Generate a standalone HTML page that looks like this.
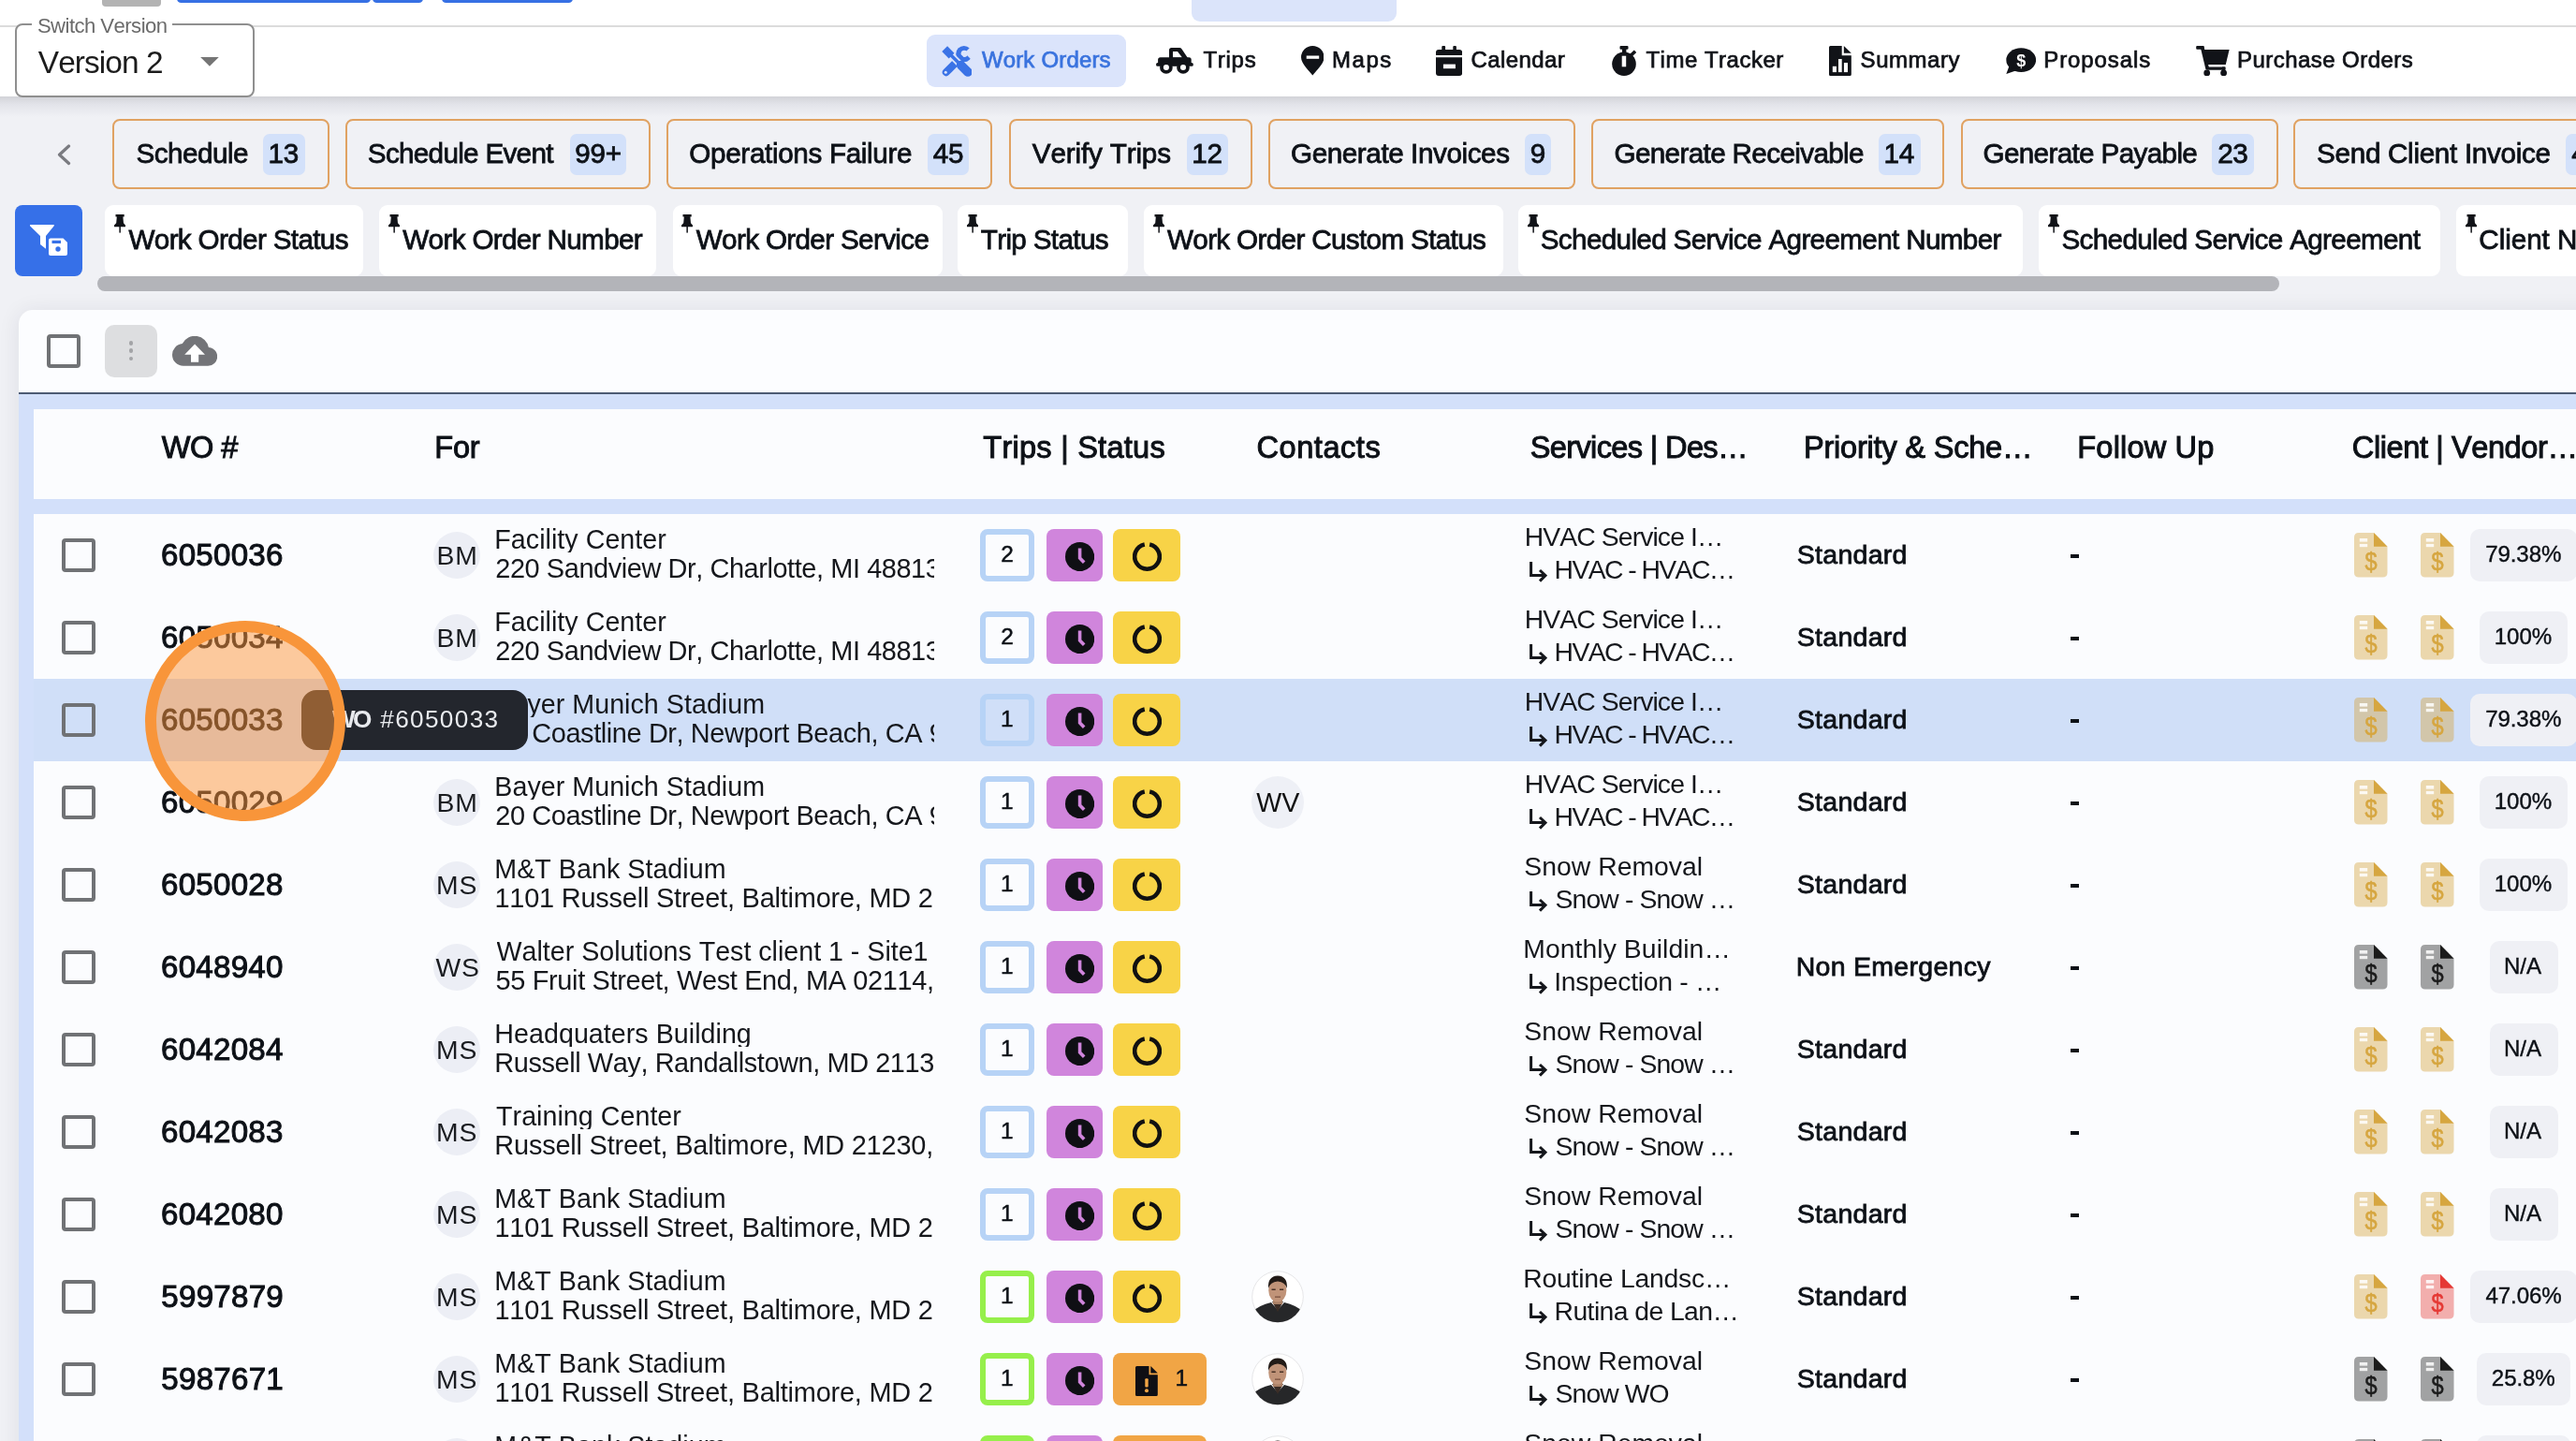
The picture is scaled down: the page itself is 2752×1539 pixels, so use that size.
<!DOCTYPE html>
<html><head><meta charset="utf-8"><title>Work Orders</title>
<style>
html,body{margin:0;padding:0;}
body{width:2752px;height:1539px;overflow:hidden;position:relative;background:#f0f1f5;font-family:"Liberation Sans",sans-serif;}
.a{position:absolute;display:block;}
.t{position:absolute;white-space:nowrap;line-height:1;font-family:"Liberation Sans",sans-serif;font-kerning:none;}
#wrap{position:absolute;left:0;top:0;width:2752px;height:1539px;overflow:hidden;will-change:transform;}
</style></head><body><div id="wrap">
<div class="a" style="left:0.00px;top:0.00px;width:2752.00px;height:103.00px;background:#ffffff;"></div>
<div class="a" style="left:0.00px;top:103.00px;width:2752.00px;height:22.00px;background:linear-gradient(#d2d3d8,#e3e4ea 40%,#f0f1f5);"></div>
<div class="a" style="left:108.50px;top:-6.00px;width:63.50px;height:12.50px;background:#b3b3b3;border-radius:4px;"></div>
<div class="a" style="left:189.30px;top:-6.00px;width:206.70px;height:8.60px;background:#3670e4;border-radius:5px;"></div>
<div class="a" style="left:398.00px;top:-6.00px;width:54.00px;height:8.60px;background:#3670e4;border-radius:5px;"></div>
<div class="a" style="left:471.50px;top:-6.00px;width:140.20px;height:8.60px;background:#3670e4;border-radius:5px;"></div>
<div class="a" style="left:1273.20px;top:-10.00px;width:218.80px;height:32.80px;background:#dbe4fa;border-radius:9px;"></div>
<div class="a" style="left:0.00px;top:26.70px;width:2752.00px;height:2.20px;background:#dcdcdc;"></div>
<div class="a" style="left:16.10px;top:25.20px;width:255.60px;height:79.10px;background:#ffffff;border-radius:8px;border:2px solid #8f8f8f;box-sizing:border-box;"></div>
<div class="a" style="left:34.00px;top:20.00px;width:150.00px;height:10.00px;background:#ffffff;"></div>
<div class="t" style="left:39.90px;top:17.39px;font-size:22.09px;letter-spacing:-0.529px;color:#6b6b6b;">Switch Version</div>
<div class="t" style="left:40.75px;top:49.79px;font-size:33.43px;letter-spacing:-0.913px;color:#1c1c1c;">Version 2</div>
<svg class="a" style="left:213.90px;top:61.00px;" width="19.90" height="9.80" viewBox="0 0 20 10"><path d="M0 0H20L10 10Z" fill="#757575"/></svg>
<div class="a" style="left:990.00px;top:37.00px;width:212.70px;height:55.70px;background:#dbe4fb;border-radius:9px;"></div>
<div class="t" style="left:1048.89px;top:52.49px;font-size:23.98px;letter-spacing:0.186px;color:#3a73de;-webkit-text-stroke:0.75px #3a73de;">Work Orders</div>
<div class="t" style="left:1285.46px;top:52.49px;font-size:23.98px;letter-spacing:0.728px;color:#111318;-webkit-text-stroke:0.75px #111318;">Trips</div>
<div class="t" style="left:1423.03px;top:52.49px;font-size:23.98px;letter-spacing:1.563px;color:#111318;-webkit-text-stroke:0.75px #111318;">Maps</div>
<div class="t" style="left:1571.38px;top:52.49px;font-size:23.98px;letter-spacing:0.442px;color:#111318;-webkit-text-stroke:0.75px #111318;">Calendar</div>
<div class="t" style="left:1758.46px;top:52.49px;font-size:23.98px;letter-spacing:0.509px;color:#111318;-webkit-text-stroke:0.75px #111318;">Time Tracker</div>
<div class="t" style="left:1987.61px;top:52.49px;font-size:23.98px;letter-spacing:0.538px;color:#111318;-webkit-text-stroke:0.75px #111318;">Summary</div>
<div class="t" style="left:2183.33px;top:52.49px;font-size:23.98px;letter-spacing:0.911px;color:#111318;-webkit-text-stroke:0.75px #111318;">Proposals</div>
<div class="t" style="left:2390.03px;top:52.49px;font-size:23.98px;letter-spacing:0.461px;color:#111318;-webkit-text-stroke:0.75px #111318;">Purchase Orders</div>
<svg class="a" style="left:1005.80px;top:49.00px;" width="32.50" height="32.50" viewBox="0 0 32.5 32.5"><defs><mask id="wm"><rect x="-5" y="-5" width="45" height="45" fill="#fff"/><path d="M24.5 7.5 L33 -1 L40 6 L31.5 14.5 Z" fill="#000"/><circle cx="24.2" cy="8.3" r="3.6" fill="#000"/></mask></defs><g mask="url(#wm)"><circle cx="23.8" cy="8.7" r="8.6" fill="#3b73e6"/></g><path d="M19.5 13.5 L4.8 28.2" stroke="#3b73e6" stroke-width="8" stroke-linecap="round"/><circle cx="4.3" cy="28.3" r="1.5" fill="#dbe4fb"/><path d="M9 9 L21 21" stroke="#dbe4fb" stroke-width="7"/><path d="M3.2 3.2 L10.6 10.6" stroke="#3b73e6" stroke-width="8.2"/><path d="M9 9 L21 21" stroke="#3b73e6" stroke-width="3.6"/><path d="M20.6 20.6 L28 28" stroke="#3b73e6" stroke-width="9.6" stroke-linecap="round"/></svg>
<svg class="a" style="left:1235.00px;top:51.00px;" width="40.00" height="28.00" viewBox="0 0 40 28"><path fill-rule="evenodd" d="M14 11 V2.5 Q14 0 16.5 0 H25 Q26.6 0 27.6 1.4 L34 11 Z M18 3.9 V10.5 H28 L23 3.9 Z" fill="#111318"/><rect x="2.1" y="10.2" width="35.6" height="9" rx="2.5" fill="#111318"/><rect x="0" y="16" width="39.9" height="3.8" rx="1.9" fill="#111318"/><circle cx="10.9" cy="21" r="6.85" fill="#111318"/><circle cx="10.9" cy="21" r="3.06" fill="#fff"/><circle cx="29" cy="21" r="6.85" fill="#111318"/><circle cx="29" cy="21" r="3.06" fill="#fff"/></svg>
<svg class="a" style="left:1389.80px;top:49.10px;" width="24.60" height="31.60" viewBox="0 0 24.6 31.6"><path d="M12.3 31.6 C10 28 0 19.5 0 12.3 A12.3 12.3 0 0 1 24.6 12.3 C24.6 19.5 14.6 28 12.3 31.6 Z" fill="#111318"/><rect x="5.7" y="10.5" width="13.5" height="3.3" fill="#fff"/></svg>
<svg class="a" style="left:1534.00px;top:49.00px;" width="28.20" height="32.00" viewBox="0 0 28.2 32"><rect x="6.3" y="0" width="3.8" height="6" rx="1" fill="#111318"/><rect x="18.3" y="0" width="3.6" height="6" rx="1" fill="#111318"/><path d="M0 7 Q0 3.9 3 3.9 H25.2 Q28.2 3.9 28.2 7 V9.9 H0 Z" fill="#111318"/><path d="M0 12.2 H28.2 V29 Q28.2 32 25.2 32 H3 Q0 32 0 29 Z" fill="#111318"/><rect x="7.9" y="19.6" width="13" height="4.6" fill="#fff"/></svg>
<svg class="a" style="left:1721.50px;top:49.00px;" width="26.50" height="32.00" viewBox="0 0 26.5 32"><rect x="8.5" y="0" width="9" height="3.7" rx="1" fill="#111318"/><rect x="11" y="3" width="4.4" height="4.5" fill="#111318"/><circle cx="13" cy="19.2" r="12.8" fill="#111318"/><path d="M20 10.5 L25 5.8" stroke="#111318" stroke-width="3.6"/><rect x="10.7" y="10.7" width="4.5" height="11.6" fill="#fff"/></svg>
<svg class="a" style="left:1954.00px;top:49.00px;" width="23.80" height="32.00" viewBox="0 0 23.8 32"><path d="M1.5 0 H13.7 V10.2 H23.8 V30.4 Q23.8 32 22.2 32 H1.5 Q0 32 0 30.4 V1.5 Q0 0 1.5 0 Z" fill="#111318"/><path d="M15.8 0 L23.8 7.7 H15.8 Z" fill="#111318"/><rect x="3.8" y="21.8" width="4.1" height="6.3" fill="#fff"/><rect x="10" y="14" width="3.7" height="14.1" fill="#fff"/><rect x="15.9" y="18" width="4.1" height="10.1" fill="#fff"/></svg>
<svg class="a" style="left:2142.70px;top:50.80px;" width="32.30" height="28.00" viewBox="0 0 32.3 28"><ellipse cx="16.2" cy="13.05" rx="15.9" ry="12.85" fill="#111318"/><path d="M3.3 20 L0.3 27.9 L10.5 24.5 Z" fill="#111318"/><text x="16.2" y="19.75" font-family="Liberation Sans" font-weight="700" font-size="18" fill="#fff" text-anchor="middle">$</text></svg>
<svg class="a" style="left:2345.80px;top:48.90px;" width="36.00" height="32.50" viewBox="0 0 36 32.5"><rect x="0.2" y="0" width="8.6" height="3.8" rx="1" fill="#111318"/><path d="M6.8 1.9 L12.4 25" stroke="#111318" stroke-width="3.8"/><path d="M6.7 4.1 H35.6 L31.8 19.9 H11 Z" fill="#111318"/><rect x="11" y="22.5" width="20.4" height="3.2" rx="1" fill="#111318"/><rect x="28" y="22.5" width="3.4" height="5" fill="#111318"/><circle cx="11.7" cy="28.9" r="3.4" fill="#111318"/><circle cx="29.6" cy="28.9" r="3.4" fill="#111318"/></svg>
<svg class="a" style="left:60.00px;top:154.30px;" width="16.00" height="22.50" viewBox="0 0 16 22.5"><path d="M13.5 2 L3.5 11.25 L13.5 20.5" fill="none" stroke="#7a7b80" stroke-width="3.2" stroke-linecap="round" stroke-linejoin="round"/></svg>
<div class="a" style="left:119.70px;top:126.80px;width:232.00px;height:75.70px;border-radius:8px;border:2px solid #e0a262;box-sizing:border-box;"></div>
<div class="t" style="left:145.55px;top:148.79px;font-size:29.65px;letter-spacing:-0.512px;color:#0d1117;-webkit-text-stroke:0.8px #0d1117;">Schedule</div>
<div class="a" style="left:281.00px;top:143.10px;width:44.60px;height:43.70px;background:#d3e1fa;border-radius:7px;"></div>
<div class="t" style="left:286.48px;top:148.79px;font-size:29.65px;letter-spacing:-0.300px;color:#0d1117;-webkit-text-stroke:0.8px #0d1117;">13</div>
<div class="a" style="left:368.60px;top:126.80px;width:326.90px;height:75.70px;border-radius:8px;border:2px solid #e0a262;box-sizing:border-box;"></div>
<div class="t" style="left:392.85px;top:148.79px;font-size:29.65px;letter-spacing:-0.696px;color:#0d1117;-webkit-text-stroke:0.8px #0d1117;">Schedule Event</div>
<div class="a" style="left:609.00px;top:143.10px;width:60.30px;height:43.70px;background:#d3e1fa;border-radius:7px;"></div>
<div class="t" style="left:614.34px;top:148.79px;font-size:29.65px;letter-spacing:-0.300px;color:#0d1117;-webkit-text-stroke:0.8px #0d1117;">99+</div>
<div class="a" style="left:712.00px;top:126.80px;width:348.40px;height:75.70px;border-radius:8px;border:2px solid #e0a262;box-sizing:border-box;"></div>
<div class="t" style="left:736.30px;top:148.79px;font-size:29.65px;letter-spacing:-0.329px;color:#0d1117;-webkit-text-stroke:0.8px #0d1117;">Operations Failure</div>
<div class="a" style="left:991.00px;top:143.10px;width:43.70px;height:43.70px;background:#d3e1fa;border-radius:7px;"></div>
<div class="t" style="left:996.79px;top:148.79px;font-size:29.65px;letter-spacing:-0.300px;color:#0d1117;-webkit-text-stroke:0.8px #0d1117;">45</div>
<div class="a" style="left:1077.50px;top:126.80px;width:260.60px;height:75.70px;border-radius:8px;border:2px solid #e0a262;box-sizing:border-box;"></div>
<div class="t" style="left:1102.87px;top:148.79px;font-size:29.65px;letter-spacing:-0.157px;color:#0d1117;-webkit-text-stroke:0.8px #0d1117;">Verify Trips</div>
<div class="a" style="left:1267.60px;top:143.10px;width:44.90px;height:43.70px;background:#d3e1fa;border-radius:7px;"></div>
<div class="t" style="left:1273.33px;top:148.79px;font-size:29.65px;letter-spacing:-0.300px;color:#0d1117;-webkit-text-stroke:0.8px #0d1117;">12</div>
<div class="a" style="left:1355.00px;top:126.80px;width:328.20px;height:75.70px;border-radius:8px;border:2px solid #e0a262;box-sizing:border-box;"></div>
<div class="t" style="left:1379.01px;top:148.79px;font-size:29.65px;letter-spacing:-0.411px;color:#0d1117;-webkit-text-stroke:0.8px #0d1117;">Generate Invoices</div>
<div class="a" style="left:1628.70px;top:143.10px;width:28.80px;height:43.70px;background:#d3e1fa;border-radius:7px;"></div>
<div class="t" style="left:1634.86px;top:148.79px;font-size:29.65px;letter-spacing:-0.300px;color:#0d1117;-webkit-text-stroke:0.8px #0d1117;">9</div>
<div class="a" style="left:1700.30px;top:126.80px;width:377.10px;height:75.70px;border-radius:8px;border:2px solid #e0a262;box-sizing:border-box;"></div>
<div class="t" style="left:1724.51px;top:148.79px;font-size:29.65px;letter-spacing:-0.636px;color:#0d1117;-webkit-text-stroke:0.8px #0d1117;">Generate Receivable</div>
<div class="a" style="left:2007.40px;top:143.10px;width:44.30px;height:43.70px;background:#d3e1fa;border-radius:7px;"></div>
<div class="t" style="left:2012.51px;top:148.79px;font-size:29.65px;letter-spacing:-0.300px;color:#0d1117;-webkit-text-stroke:0.8px #0d1117;">14</div>
<div class="a" style="left:2094.50px;top:126.80px;width:339.20px;height:75.70px;border-radius:8px;border:2px solid #e0a262;box-sizing:border-box;"></div>
<div class="t" style="left:2118.51px;top:148.79px;font-size:29.65px;letter-spacing:-0.641px;color:#0d1117;-webkit-text-stroke:0.8px #0d1117;">Generate Payable</div>
<div class="a" style="left:2363.20px;top:143.10px;width:44.80px;height:43.70px;background:#d3e1fa;border-radius:7px;"></div>
<div class="t" style="left:2369.17px;top:148.79px;font-size:29.65px;letter-spacing:-0.300px;color:#0d1117;-webkit-text-stroke:0.8px #0d1117;">23</div>
<div class="a" style="left:2449.70px;top:126.80px;width:350.30px;height:75.70px;border-radius:8px;border:2px solid #e0a262;box-sizing:border-box;"></div>
<div class="t" style="left:2475.05px;top:148.79px;font-size:29.65px;letter-spacing:-0.301px;color:#0d1117;-webkit-text-stroke:0.8px #0d1117;">Send Client Invoice</div>
<div class="a" style="left:2740.80px;top:143.10px;width:49.20px;height:43.70px;background:#d3e1fa;border-radius:7px;"></div>
<div class="t" style="left:2747.32px;top:148.79px;font-size:29.65px;letter-spacing:-0.300px;color:#0d1117;-webkit-text-stroke:0.8px #0d1117;">45</div>
<div class="a" style="left:16.00px;top:219.10px;width:72.00px;height:75.70px;background:#3670e8;border-radius:8px;"></div>
<svg class="a" style="left:32.00px;top:240.30px;" width="40.00" height="33.00" viewBox="0 0 40 33"><path d="M0.5 0 H25.2 Q26.5 0 25.7 1.2 L17 12 V25.7 L11 21 V12 L0 1.2 Q-0.5 0 0.5 0 Z" fill="#fff"/><path d="M17 12 L18.5 13 V25.7 H17 Z" fill="#3670e8"/><rect x="18.5" y="12.7" width="22" height="21" fill="#3670e8"/><path d="M22 14.4 H35.5 L40 18.9 V31 Q40 33 38 33 H22 Q20 33 20 31 V16.4 Q20 14.4 22 14.4 Z" fill="#fff"/><rect x="23.5" y="16.8" width="9.5" height="3.2" fill="#3670e8"/><circle cx="30" cy="26" r="2.7" fill="#3670e8"/></svg>
<div class="a" style="left:112.20px;top:219.10px;width:276.30px;height:75.70px;background:#ffffff;border-radius:9px;"></div>
<div class="t" style="left:137.47px;top:240.89px;font-size:29.65px;letter-spacing:-0.650px;color:#0d1117;-webkit-text-stroke:0.8px #0d1117;">Work Order Status</div>
<svg class="a" style="left:122.00px;top:229.00px;" width="12.20" height="19.60" viewBox="0 0 12.2 19.6"><path d="M1.5 0 H10.7 V2.6 H9.4 L10 9.3 L12.2 11.6 V13.3 H0 V11.6 L2.2 9.3 L2.8 2.6 H1.5 Z" fill="#111318"/><rect x="5.4" y="13" width="1.5" height="6.6" fill="#111318"/></svg>
<div class="a" style="left:405.00px;top:219.10px;width:296.40px;height:75.70px;background:#ffffff;border-radius:9px;"></div>
<div class="t" style="left:430.27px;top:240.89px;font-size:29.65px;letter-spacing:-0.650px;color:#0d1117;-webkit-text-stroke:0.8px #0d1117;">Work Order Number</div>
<svg class="a" style="left:414.80px;top:229.00px;" width="12.20" height="19.60" viewBox="0 0 12.2 19.6"><path d="M1.5 0 H10.7 V2.6 H9.4 L10 9.3 L12.2 11.6 V13.3 H0 V11.6 L2.2 9.3 L2.8 2.6 H1.5 Z" fill="#111318"/><rect x="5.4" y="13" width="1.5" height="6.6" fill="#111318"/></svg>
<div class="a" style="left:718.50px;top:219.10px;width:288.50px;height:75.70px;background:#ffffff;border-radius:9px;"></div>
<div class="t" style="left:743.77px;top:240.89px;font-size:29.65px;letter-spacing:-0.650px;color:#0d1117;-webkit-text-stroke:0.8px #0d1117;">Work Order Service</div>
<svg class="a" style="left:728.30px;top:229.00px;" width="12.20" height="19.60" viewBox="0 0 12.2 19.6"><path d="M1.5 0 H10.7 V2.6 H9.4 L10 9.3 L12.2 11.6 V13.3 H0 V11.6 L2.2 9.3 L2.8 2.6 H1.5 Z" fill="#111318"/><rect x="5.4" y="13" width="1.5" height="6.6" fill="#111318"/></svg>
<div class="a" style="left:1023.00px;top:219.10px;width:181.60px;height:75.70px;background:#ffffff;border-radius:9px;"></div>
<div class="t" style="left:1047.73px;top:240.89px;font-size:29.65px;letter-spacing:-0.650px;color:#0d1117;-webkit-text-stroke:0.8px #0d1117;">Trip Status</div>
<svg class="a" style="left:1032.80px;top:229.00px;" width="12.20" height="19.60" viewBox="0 0 12.2 19.6"><path d="M1.5 0 H10.7 V2.6 H9.4 L10 9.3 L12.2 11.6 V13.3 H0 V11.6 L2.2 9.3 L2.8 2.6 H1.5 Z" fill="#111318"/><rect x="5.4" y="13" width="1.5" height="6.6" fill="#111318"/></svg>
<div class="a" style="left:1221.70px;top:219.10px;width:384.00px;height:75.70px;background:#ffffff;border-radius:9px;"></div>
<div class="t" style="left:1246.97px;top:240.89px;font-size:29.65px;letter-spacing:-0.650px;color:#0d1117;-webkit-text-stroke:0.8px #0d1117;">Work Order Custom Status</div>
<svg class="a" style="left:1231.50px;top:229.00px;" width="12.20" height="19.60" viewBox="0 0 12.2 19.6"><path d="M1.5 0 H10.7 V2.6 H9.4 L10 9.3 L12.2 11.6 V13.3 H0 V11.6 L2.2 9.3 L2.8 2.6 H1.5 Z" fill="#111318"/><rect x="5.4" y="13" width="1.5" height="6.6" fill="#111318"/></svg>
<div class="a" style="left:1621.70px;top:219.10px;width:539.60px;height:75.70px;background:#ffffff;border-radius:9px;"></div>
<div class="t" style="left:1645.75px;top:240.89px;font-size:29.65px;letter-spacing:-0.650px;color:#0d1117;-webkit-text-stroke:0.8px #0d1117;">Scheduled Service Agreement Number</div>
<svg class="a" style="left:1631.50px;top:229.00px;" width="12.20" height="19.60" viewBox="0 0 12.2 19.6"><path d="M1.5 0 H10.7 V2.6 H9.4 L10 9.3 L12.2 11.6 V13.3 H0 V11.6 L2.2 9.3 L2.8 2.6 H1.5 Z" fill="#111318"/><rect x="5.4" y="13" width="1.5" height="6.6" fill="#111318"/></svg>
<div class="a" style="left:2178.40px;top:219.10px;width:428.90px;height:75.70px;background:#ffffff;border-radius:9px;"></div>
<div class="t" style="left:2202.45px;top:240.89px;font-size:29.65px;letter-spacing:-0.650px;color:#0d1117;-webkit-text-stroke:0.8px #0d1117;">Scheduled Service Agreement</div>
<svg class="a" style="left:2188.20px;top:229.00px;" width="12.20" height="19.60" viewBox="0 0 12.2 19.6"><path d="M1.5 0 H10.7 V2.6 H9.4 L10 9.3 L12.2 11.6 V13.3 H0 V11.6 L2.2 9.3 L2.8 2.6 H1.5 Z" fill="#111318"/><rect x="5.4" y="13" width="1.5" height="6.6" fill="#111318"/></svg>
<div class="a" style="left:2624.40px;top:219.10px;width:375.60px;height:75.70px;background:#ffffff;border-radius:9px;"></div>
<div class="t" style="left:2648.29px;top:240.89px;font-size:29.65px;letter-spacing:-0.048px;color:#0d1117;-webkit-text-stroke:0.8px #0d1117;">Client Name</div>
<svg class="a" style="left:2634.20px;top:229.00px;" width="12.20" height="19.60" viewBox="0 0 12.2 19.6"><path d="M1.5 0 H10.7 V2.6 H9.4 L10 9.3 L12.2 11.6 V13.3 H0 V11.6 L2.2 9.3 L2.8 2.6 H1.5 Z" fill="#111318"/><rect x="5.4" y="13" width="1.5" height="6.6" fill="#111318"/></svg>
<div class="a" style="left:103.90px;top:295.10px;width:2330.80px;height:15.80px;background:#b3b4b9;border-radius:8px;"></div>
<div class="a" style="left:19.80px;top:331.00px;width:2800.00px;height:1300.00px;background:#fcfdff;border-radius:15px;box-shadow:0 2px 22px 2px rgba(20,30,60,0.07);"></div>
<div class="a" style="left:50.00px;top:357.00px;width:35.90px;height:35.90px;border-radius:4px;border:4px solid #707275;box-sizing:border-box;"></div>
<div class="a" style="left:112.00px;top:347.00px;width:55.90px;height:55.70px;background:#dddee0;border-radius:10px;"></div>
<div class="a" style="left:137.60px;top:364.20px;width:4.80px;height:4.80px;background:#a3a4a7;border-radius:3px;"></div>
<div class="a" style="left:137.60px;top:372.40px;width:4.80px;height:4.80px;background:#a3a4a7;border-radius:3px;"></div>
<div class="a" style="left:137.60px;top:380.50px;width:4.80px;height:4.80px;background:#a3a4a7;border-radius:3px;"></div>
<svg class="a" style="left:183.80px;top:359.00px;" width="48.20" height="31.80" viewBox="0 0 48.2 31.8"><path d="M38.9 12 A15 15 0 0 0 10.8 8 A12 12 0 0 0 0 20 A11.8 11.8 0 0 0 11.8 31.8 H37.8 A10 10 0 0 0 48.2 21.8 C48.2 16.5 44 12.3 38.9 12 Z" fill="#737478"/><path d="M24.1 8.5 L35 19.8 H28.2 V27.8 H20 V19.8 H13.2 Z" fill="#fff"/></svg>
<div class="a" style="left:19.80px;top:419.00px;width:2800.00px;height:2.00px;background:#4d5b73;"></div>
<div class="a" style="left:19.80px;top:421.00px;width:2800.00px;height:1200.00px;background:#d3e0fa;"></div>
<div class="a" style="left:35.70px;top:436.50px;width:2800.00px;height:96.10px;background:#fbfcfe;"></div>
<div class="t" style="left:172.86px;top:462.23px;font-size:32.56px;letter-spacing:-0.600px;color:#0d1117;-webkit-text-stroke:1.0px #0d1117;">WO #</div>
<div class="t" style="left:464.33px;top:462.23px;font-size:32.56px;letter-spacing:-0.313px;color:#0d1117;-webkit-text-stroke:1.0px #0d1117;">For</div>
<div class="t" style="left:1050.27px;top:462.23px;font-size:32.56px;letter-spacing:0.254px;color:#0d1117;-webkit-text-stroke:1.0px #0d1117;">Trips | Status</div>
<div class="t" style="left:1342.45px;top:462.23px;font-size:32.56px;letter-spacing:0.549px;color:#0d1117;-webkit-text-stroke:1.0px #0d1117;">Contacts</div>
<div class="t" style="left:1634.72px;top:462.23px;font-size:32.56px;letter-spacing:-0.640px;color:#0d1117;-webkit-text-stroke:1.0px #0d1117;">Services | Des…</div>
<div class="t" style="left:1926.93px;top:462.23px;font-size:32.56px;letter-spacing:-0.213px;color:#0d1117;-webkit-text-stroke:1.0px #0d1117;">Priority &amp; Sche…</div>
<div class="t" style="left:2219.33px;top:462.23px;font-size:32.56px;letter-spacing:0.161px;color:#0d1117;-webkit-text-stroke:1.0px #0d1117;">Follow Up</div>
<div class="t" style="left:2512.85px;top:462.23px;font-size:32.56px;letter-spacing:-0.411px;color:#0d1117;-webkit-text-stroke:1.0px #0d1117;">Client | Vendor…</div>
<div class="a" style="left:35.70px;top:548.50px;width:2800.00px;height:88.00px;background:#fbfcfe;"></div>
<div class="a" style="left:66.00px;top:574.90px;width:36.10px;height:36.10px;border-radius:4px;border:4px solid #707275;box-sizing:border-box;"></div>
<div class="t" style="left:172.02px;top:575.84px;font-size:33.14px;letter-spacing:0.237px;color:#0d1117;-webkit-text-stroke:1.0px #0d1117;">6050036</div>
<div class="a" style="left:462.75px;top:567.75px;width:50.50px;height:50.50px;background:#eceef5;border-radius:26px;"></div>
<div class="t" style="left:466.54px;top:578.80px;font-size:28.34px;letter-spacing:0.800px;color:#1a1c20;">BM</div>
<div class="t" style="left:528.35px;top:561.56px;font-size:28.63px;letter-spacing:0.038px;color:#15171c;width:469.85px;overflow:hidden;">Facility Center</div>
<div class="t" style="left:529.25px;top:593.21px;font-size:28.92px;letter-spacing:-0.413px;color:#15171c;width:468.95px;overflow:hidden;">220 Sandview Dr, Charlotte, MI 48813, USA</div>
<div class="a" style="left:1047.00px;top:564.80px;width:58.00px;height:55.90px;border-radius:8px;border:6px solid #b7d3f6;box-sizing:border-box;"></div>
<div class="t" style="left:1069.21px;top:580.12px;font-size:24.42px;letter-spacing:0.000px;color:#0d1117;-webkit-text-stroke:0.5px #0d1117;">2</div>
<div class="a" style="left:1118.00px;top:564.80px;width:60.00px;height:55.90px;background:#d085dc;border-radius:8px;"></div>
<svg class="a" style="left:1138.00px;top:579.20px;" width="31.20" height="31.20" viewBox="0 0 31.2 31.2"><circle cx="15.6" cy="15.6" r="15.6" fill="#0f0f14"/><path d="M15.6 6.5 V17 L20.2 21.8" fill="none" stroke="#d085dc" stroke-width="3.6" stroke-linecap="butt" stroke-linejoin="miter"/></svg>
<div class="a" style="left:1189.00px;top:564.80px;width:71.80px;height:55.90px;background:#f8d347;border-radius:8px;"></div>
<svg class="a" style="left:1209.70px;top:579.40px;" width="31.20" height="31.20" viewBox="0 0 31.2 31.2"><path d="M12.8 2.4 A13.3 13.3 0 1 0 18.2 2.4" fill="none" stroke="#111" stroke-width="4.6" stroke-linecap="butt"/></svg>
<div class="t" style="left:1628.67px;top:558.90px;font-size:28.34px;letter-spacing:-0.890px;color:#15171c;">HVAC Service I…</div>
<svg class="a" style="left:1633.70px;top:600.30px;" width="19.80" height="22.40" viewBox="0 0 19.8 22.4"><path d="M1.6 0 V14.6 H16" fill="none" stroke="#15171c" stroke-width="3"/><path d="M11 9 L17 14.6 L11 20.6" fill="none" stroke="#15171c" stroke-width="3"/></svg>
<div class="t" style="left:1660.57px;top:594.00px;font-size:28.34px;letter-spacing:-1.578px;color:#15171c;">HVAC - HVAC…</div>
<div class="t" style="left:1919.81px;top:577.88px;font-size:28.49px;letter-spacing:0.286px;color:#0d1117;-webkit-text-stroke:0.8px #0d1117;">Standard</div>
<div class="a" style="left:2212.20px;top:591.70px;width:8.50px;height:4.60px;background:#0d1117;"></div>
<svg class="a" style="left:2515.20px;top:569.20px;" width="35.50" height="47.60" viewBox="0 0 35.5 47.6"><path d="M0 5 Q0 0 5 0 H21 L35.5 14.7 V42.6 Q35.5 47.6 30.5 47.6 H5 Q0 47.6 0 42.6 Z" fill="rgba(212,164,62,0.42)"/><path d="M21 0 L35.5 14.7 H21 Z" fill="#d6a640"/><rect x="5.8" y="6" width="8.4" height="3.6" fill="#fff" fill-opacity="0.85"/><rect x="5.8" y="11.9" width="8.4" height="3.3" fill="#fff" fill-opacity="0.85"/><text transform="translate(18.1,0) scale(0.86,1)" x="0" y="40.4" font-family="Liberation Sans" font-weight="400" stroke="#d6a640" stroke-width="0.6" font-size="27.4" fill="#d6a640" text-anchor="middle">$</text></svg>
<svg class="a" style="left:2586.10px;top:569.20px;" width="35.50" height="47.60" viewBox="0 0 35.5 47.6"><path d="M0 5 Q0 0 5 0 H21 L35.5 14.7 V42.6 Q35.5 47.6 30.5 47.6 H5 Q0 47.6 0 42.6 Z" fill="rgba(212,164,62,0.42)"/><path d="M21 0 L35.5 14.7 H21 Z" fill="#d6a640"/><rect x="5.8" y="6" width="8.4" height="3.6" fill="#fff" fill-opacity="0.85"/><rect x="5.8" y="11.9" width="8.4" height="3.3" fill="#fff" fill-opacity="0.85"/><text transform="translate(18.1,0) scale(0.86,1)" x="0" y="40.4" font-family="Liberation Sans" font-weight="400" stroke="#d6a640" stroke-width="0.6" font-size="27.4" fill="#d6a640" text-anchor="middle">$</text></svg>
<div class="a" style="left:2638.88px;top:564.80px;width:114.24px;height:55.80px;background:#eff0f5;border-radius:10px;"></div>
<div class="t" style="left:2655.14px;top:580.37px;font-size:24.13px;letter-spacing:-0.100px;color:#0d1117;-webkit-text-stroke:0.4px #0d1117;">79.38%</div>
<div class="a" style="left:35.70px;top:636.50px;width:2800.00px;height:88.00px;background:#fbfcfe;"></div>
<div class="a" style="left:66.00px;top:662.90px;width:36.10px;height:36.10px;border-radius:4px;border:4px solid #707275;box-sizing:border-box;"></div>
<div class="t" style="left:172.02px;top:663.84px;font-size:33.14px;letter-spacing:0.237px;color:#0d1117;-webkit-text-stroke:1.0px #0d1117;">6050034</div>
<div class="a" style="left:462.75px;top:655.75px;width:50.50px;height:50.50px;background:#eceef5;border-radius:26px;"></div>
<div class="t" style="left:466.54px;top:666.80px;font-size:28.34px;letter-spacing:0.800px;color:#1a1c20;">BM</div>
<div class="t" style="left:528.35px;top:649.56px;font-size:28.63px;letter-spacing:0.038px;color:#15171c;width:469.85px;overflow:hidden;">Facility Center</div>
<div class="t" style="left:529.25px;top:681.21px;font-size:28.92px;letter-spacing:-0.413px;color:#15171c;width:468.95px;overflow:hidden;">220 Sandview Dr, Charlotte, MI 48813, USA</div>
<div class="a" style="left:1047.00px;top:652.80px;width:58.00px;height:55.90px;border-radius:8px;border:6px solid #b7d3f6;box-sizing:border-box;"></div>
<div class="t" style="left:1069.21px;top:668.12px;font-size:24.42px;letter-spacing:0.000px;color:#0d1117;-webkit-text-stroke:0.5px #0d1117;">2</div>
<div class="a" style="left:1118.00px;top:652.80px;width:60.00px;height:55.90px;background:#d085dc;border-radius:8px;"></div>
<svg class="a" style="left:1138.00px;top:667.20px;" width="31.20" height="31.20" viewBox="0 0 31.2 31.2"><circle cx="15.6" cy="15.6" r="15.6" fill="#0f0f14"/><path d="M15.6 6.5 V17 L20.2 21.8" fill="none" stroke="#d085dc" stroke-width="3.6" stroke-linecap="butt" stroke-linejoin="miter"/></svg>
<div class="a" style="left:1189.00px;top:652.80px;width:71.80px;height:55.90px;background:#f8d347;border-radius:8px;"></div>
<svg class="a" style="left:1209.70px;top:667.40px;" width="31.20" height="31.20" viewBox="0 0 31.2 31.2"><path d="M12.8 2.4 A13.3 13.3 0 1 0 18.2 2.4" fill="none" stroke="#111" stroke-width="4.6" stroke-linecap="butt"/></svg>
<div class="t" style="left:1628.67px;top:646.90px;font-size:28.34px;letter-spacing:-0.890px;color:#15171c;">HVAC Service I…</div>
<svg class="a" style="left:1633.70px;top:688.30px;" width="19.80" height="22.40" viewBox="0 0 19.8 22.4"><path d="M1.6 0 V14.6 H16" fill="none" stroke="#15171c" stroke-width="3"/><path d="M11 9 L17 14.6 L11 20.6" fill="none" stroke="#15171c" stroke-width="3"/></svg>
<div class="t" style="left:1660.57px;top:682.00px;font-size:28.34px;letter-spacing:-1.578px;color:#15171c;">HVAC - HVAC…</div>
<div class="t" style="left:1919.81px;top:665.88px;font-size:28.49px;letter-spacing:0.286px;color:#0d1117;-webkit-text-stroke:0.8px #0d1117;">Standard</div>
<div class="a" style="left:2212.20px;top:679.70px;width:8.50px;height:4.60px;background:#0d1117;"></div>
<svg class="a" style="left:2515.20px;top:657.20px;" width="35.50" height="47.60" viewBox="0 0 35.5 47.6"><path d="M0 5 Q0 0 5 0 H21 L35.5 14.7 V42.6 Q35.5 47.6 30.5 47.6 H5 Q0 47.6 0 42.6 Z" fill="rgba(212,164,62,0.42)"/><path d="M21 0 L35.5 14.7 H21 Z" fill="#d6a640"/><rect x="5.8" y="6" width="8.4" height="3.6" fill="#fff" fill-opacity="0.85"/><rect x="5.8" y="11.9" width="8.4" height="3.3" fill="#fff" fill-opacity="0.85"/><text transform="translate(18.1,0) scale(0.86,1)" x="0" y="40.4" font-family="Liberation Sans" font-weight="400" stroke="#d6a640" stroke-width="0.6" font-size="27.4" fill="#d6a640" text-anchor="middle">$</text></svg>
<svg class="a" style="left:2586.10px;top:657.20px;" width="35.50" height="47.60" viewBox="0 0 35.5 47.6"><path d="M0 5 Q0 0 5 0 H21 L35.5 14.7 V42.6 Q35.5 47.6 30.5 47.6 H5 Q0 47.6 0 42.6 Z" fill="rgba(212,164,62,0.42)"/><path d="M21 0 L35.5 14.7 H21 Z" fill="#d6a640"/><rect x="5.8" y="6" width="8.4" height="3.6" fill="#fff" fill-opacity="0.85"/><rect x="5.8" y="11.9" width="8.4" height="3.3" fill="#fff" fill-opacity="0.85"/><text transform="translate(18.1,0) scale(0.86,1)" x="0" y="40.4" font-family="Liberation Sans" font-weight="400" stroke="#d6a640" stroke-width="0.6" font-size="27.4" fill="#d6a640" text-anchor="middle">$</text></svg>
<div class="a" style="left:2649.14px;top:652.80px;width:93.71px;height:55.80px;background:#eff0f5;border-radius:10px;"></div>
<div class="t" style="left:2664.81px;top:668.37px;font-size:24.13px;letter-spacing:-0.100px;color:#0d1117;-webkit-text-stroke:0.4px #0d1117;">100%</div>
<div class="a" style="left:35.70px;top:724.50px;width:2800.00px;height:88.00px;background:#d0dff8;"></div>
<div class="a" style="left:66.00px;top:750.90px;width:36.10px;height:36.10px;border-radius:4px;border:4px solid #707275;box-sizing:border-box;"></div>
<div class="t" style="left:172.02px;top:751.84px;font-size:33.14px;letter-spacing:0.237px;color:#0d1117;-webkit-text-stroke:1.0px #0d1117;">6050033</div>
<div class="a" style="left:462.75px;top:743.75px;width:50.50px;height:50.50px;background:#eceef5;border-radius:26px;"></div>
<div class="t" style="left:466.54px;top:754.80px;font-size:28.34px;letter-spacing:0.800px;color:#1a1c20;">BM</div>
<div class="t" style="left:528.35px;top:737.56px;font-size:28.63px;letter-spacing:0.038px;color:#15171c;width:469.85px;overflow:hidden;">Bayer Munich Stadium</div>
<div class="t" style="left:529.25px;top:769.21px;font-size:28.92px;letter-spacing:-0.392px;color:#15171c;width:468.95px;overflow:hidden;">20 Coastline Dr, Newport Beach, CA 92660, USA</div>
<div class="a" style="left:1047.00px;top:740.80px;width:58.00px;height:55.90px;border-radius:8px;border:6px solid #b7d3f6;box-sizing:border-box;"></div>
<div class="t" style="left:1068.88px;top:756.12px;font-size:24.42px;letter-spacing:0.000px;color:#0d1117;-webkit-text-stroke:0.5px #0d1117;">1</div>
<div class="a" style="left:1118.00px;top:740.80px;width:60.00px;height:55.90px;background:#d085dc;border-radius:8px;"></div>
<svg class="a" style="left:1138.00px;top:755.20px;" width="31.20" height="31.20" viewBox="0 0 31.2 31.2"><circle cx="15.6" cy="15.6" r="15.6" fill="#0f0f14"/><path d="M15.6 6.5 V17 L20.2 21.8" fill="none" stroke="#d085dc" stroke-width="3.6" stroke-linecap="butt" stroke-linejoin="miter"/></svg>
<div class="a" style="left:1189.00px;top:740.80px;width:71.80px;height:55.90px;background:#f8d347;border-radius:8px;"></div>
<svg class="a" style="left:1209.70px;top:755.40px;" width="31.20" height="31.20" viewBox="0 0 31.2 31.2"><path d="M12.8 2.4 A13.3 13.3 0 1 0 18.2 2.4" fill="none" stroke="#111" stroke-width="4.6" stroke-linecap="butt"/></svg>
<div class="t" style="left:1628.67px;top:734.90px;font-size:28.34px;letter-spacing:-0.890px;color:#15171c;">HVAC Service I…</div>
<svg class="a" style="left:1633.70px;top:776.30px;" width="19.80" height="22.40" viewBox="0 0 19.8 22.4"><path d="M1.6 0 V14.6 H16" fill="none" stroke="#15171c" stroke-width="3"/><path d="M11 9 L17 14.6 L11 20.6" fill="none" stroke="#15171c" stroke-width="3"/></svg>
<div class="t" style="left:1660.57px;top:770.00px;font-size:28.34px;letter-spacing:-1.578px;color:#15171c;">HVAC - HVAC…</div>
<div class="t" style="left:1919.81px;top:753.88px;font-size:28.49px;letter-spacing:0.286px;color:#0d1117;-webkit-text-stroke:0.8px #0d1117;">Standard</div>
<div class="a" style="left:2212.20px;top:767.70px;width:8.50px;height:4.60px;background:#0d1117;"></div>
<svg class="a" style="left:2515.20px;top:745.20px;" width="35.50" height="47.60" viewBox="0 0 35.5 47.6"><path d="M0 5 Q0 0 5 0 H21 L35.5 14.7 V42.6 Q35.5 47.6 30.5 47.6 H5 Q0 47.6 0 42.6 Z" fill="rgba(212,164,62,0.42)"/><path d="M21 0 L35.5 14.7 H21 Z" fill="#d6a640"/><rect x="5.8" y="6" width="8.4" height="3.6" fill="#fff" fill-opacity="0.85"/><rect x="5.8" y="11.9" width="8.4" height="3.3" fill="#fff" fill-opacity="0.85"/><text transform="translate(18.1,0) scale(0.86,1)" x="0" y="40.4" font-family="Liberation Sans" font-weight="400" stroke="#d6a640" stroke-width="0.6" font-size="27.4" fill="#d6a640" text-anchor="middle">$</text></svg>
<svg class="a" style="left:2586.10px;top:745.20px;" width="35.50" height="47.60" viewBox="0 0 35.5 47.6"><path d="M0 5 Q0 0 5 0 H21 L35.5 14.7 V42.6 Q35.5 47.6 30.5 47.6 H5 Q0 47.6 0 42.6 Z" fill="rgba(212,164,62,0.42)"/><path d="M21 0 L35.5 14.7 H21 Z" fill="#d6a640"/><rect x="5.8" y="6" width="8.4" height="3.6" fill="#fff" fill-opacity="0.85"/><rect x="5.8" y="11.9" width="8.4" height="3.3" fill="#fff" fill-opacity="0.85"/><text transform="translate(18.1,0) scale(0.86,1)" x="0" y="40.4" font-family="Liberation Sans" font-weight="400" stroke="#d6a640" stroke-width="0.6" font-size="27.4" fill="#d6a640" text-anchor="middle">$</text></svg>
<div class="a" style="left:2638.88px;top:740.80px;width:114.24px;height:55.80px;background:#eff0f5;border-radius:10px;"></div>
<div class="t" style="left:2655.14px;top:756.37px;font-size:24.13px;letter-spacing:-0.100px;color:#0d1117;-webkit-text-stroke:0.4px #0d1117;">79.38%</div>
<div class="a" style="left:35.70px;top:812.50px;width:2800.00px;height:88.00px;background:#fbfcfe;"></div>
<div class="a" style="left:66.00px;top:838.90px;width:36.10px;height:36.10px;border-radius:4px;border:4px solid #707275;box-sizing:border-box;"></div>
<div class="t" style="left:172.02px;top:839.84px;font-size:33.14px;letter-spacing:0.237px;color:#0d1117;-webkit-text-stroke:1.0px #0d1117;">6050029</div>
<div class="a" style="left:462.75px;top:831.75px;width:50.50px;height:50.50px;background:#eceef5;border-radius:26px;"></div>
<div class="t" style="left:466.54px;top:842.80px;font-size:28.34px;letter-spacing:0.800px;color:#1a1c20;">BM</div>
<div class="t" style="left:528.35px;top:825.56px;font-size:28.63px;letter-spacing:0.038px;color:#15171c;width:469.85px;overflow:hidden;">Bayer Munich Stadium</div>
<div class="t" style="left:529.25px;top:857.21px;font-size:28.92px;letter-spacing:-0.392px;color:#15171c;width:468.95px;overflow:hidden;">20 Coastline Dr, Newport Beach, CA 92660, USA</div>
<div class="a" style="left:1047.00px;top:828.80px;width:58.00px;height:55.90px;border-radius:8px;border:6px solid #b7d3f6;box-sizing:border-box;"></div>
<div class="t" style="left:1068.88px;top:844.12px;font-size:24.42px;letter-spacing:0.000px;color:#0d1117;-webkit-text-stroke:0.5px #0d1117;">1</div>
<div class="a" style="left:1118.00px;top:828.80px;width:60.00px;height:55.90px;background:#d085dc;border-radius:8px;"></div>
<svg class="a" style="left:1138.00px;top:843.20px;" width="31.20" height="31.20" viewBox="0 0 31.2 31.2"><circle cx="15.6" cy="15.6" r="15.6" fill="#0f0f14"/><path d="M15.6 6.5 V17 L20.2 21.8" fill="none" stroke="#d085dc" stroke-width="3.6" stroke-linecap="butt" stroke-linejoin="miter"/></svg>
<div class="a" style="left:1189.00px;top:828.80px;width:71.80px;height:55.90px;background:#f8d347;border-radius:8px;"></div>
<svg class="a" style="left:1209.70px;top:843.40px;" width="31.20" height="31.20" viewBox="0 0 31.2 31.2"><path d="M12.8 2.4 A13.3 13.3 0 1 0 18.2 2.4" fill="none" stroke="#111" stroke-width="4.6" stroke-linecap="butt"/></svg>
<div class="a" style="left:1336.80px;top:829.20px;width:56.00px;height:56.00px;background:#eef0f6;border-radius:28px;"></div>
<div class="t" style="left:1342.14px;top:842.66px;font-size:28.63px;letter-spacing:0.000px;color:#111;">WV</div>
<div class="t" style="left:1628.67px;top:822.90px;font-size:28.34px;letter-spacing:-0.890px;color:#15171c;">HVAC Service I…</div>
<svg class="a" style="left:1633.70px;top:864.30px;" width="19.80" height="22.40" viewBox="0 0 19.8 22.4"><path d="M1.6 0 V14.6 H16" fill="none" stroke="#15171c" stroke-width="3"/><path d="M11 9 L17 14.6 L11 20.6" fill="none" stroke="#15171c" stroke-width="3"/></svg>
<div class="t" style="left:1660.57px;top:858.00px;font-size:28.34px;letter-spacing:-1.578px;color:#15171c;">HVAC - HVAC…</div>
<div class="t" style="left:1919.81px;top:841.88px;font-size:28.49px;letter-spacing:0.286px;color:#0d1117;-webkit-text-stroke:0.8px #0d1117;">Standard</div>
<div class="a" style="left:2212.20px;top:855.70px;width:8.50px;height:4.60px;background:#0d1117;"></div>
<svg class="a" style="left:2515.20px;top:833.20px;" width="35.50" height="47.60" viewBox="0 0 35.5 47.6"><path d="M0 5 Q0 0 5 0 H21 L35.5 14.7 V42.6 Q35.5 47.6 30.5 47.6 H5 Q0 47.6 0 42.6 Z" fill="rgba(212,164,62,0.42)"/><path d="M21 0 L35.5 14.7 H21 Z" fill="#d6a640"/><rect x="5.8" y="6" width="8.4" height="3.6" fill="#fff" fill-opacity="0.85"/><rect x="5.8" y="11.9" width="8.4" height="3.3" fill="#fff" fill-opacity="0.85"/><text transform="translate(18.1,0) scale(0.86,1)" x="0" y="40.4" font-family="Liberation Sans" font-weight="400" stroke="#d6a640" stroke-width="0.6" font-size="27.4" fill="#d6a640" text-anchor="middle">$</text></svg>
<svg class="a" style="left:2586.10px;top:833.20px;" width="35.50" height="47.60" viewBox="0 0 35.5 47.6"><path d="M0 5 Q0 0 5 0 H21 L35.5 14.7 V42.6 Q35.5 47.6 30.5 47.6 H5 Q0 47.6 0 42.6 Z" fill="rgba(212,164,62,0.42)"/><path d="M21 0 L35.5 14.7 H21 Z" fill="#d6a640"/><rect x="5.8" y="6" width="8.4" height="3.6" fill="#fff" fill-opacity="0.85"/><rect x="5.8" y="11.9" width="8.4" height="3.3" fill="#fff" fill-opacity="0.85"/><text transform="translate(18.1,0) scale(0.86,1)" x="0" y="40.4" font-family="Liberation Sans" font-weight="400" stroke="#d6a640" stroke-width="0.6" font-size="27.4" fill="#d6a640" text-anchor="middle">$</text></svg>
<div class="a" style="left:2649.14px;top:828.80px;width:93.71px;height:55.80px;background:#eff0f5;border-radius:10px;"></div>
<div class="t" style="left:2664.81px;top:844.37px;font-size:24.13px;letter-spacing:-0.100px;color:#0d1117;-webkit-text-stroke:0.4px #0d1117;">100%</div>
<div class="a" style="left:35.70px;top:900.50px;width:2800.00px;height:88.00px;background:#fbfcfe;"></div>
<div class="a" style="left:66.00px;top:926.90px;width:36.10px;height:36.10px;border-radius:4px;border:4px solid #707275;box-sizing:border-box;"></div>
<div class="t" style="left:172.02px;top:927.84px;font-size:33.14px;letter-spacing:0.237px;color:#0d1117;-webkit-text-stroke:1.0px #0d1117;">6050028</div>
<div class="a" style="left:462.75px;top:919.75px;width:50.50px;height:50.50px;background:#eceef5;border-radius:26px;"></div>
<div class="t" style="left:466.03px;top:930.80px;font-size:28.34px;letter-spacing:0.800px;color:#1a1c20;">MS</div>
<div class="t" style="left:528.35px;top:913.56px;font-size:28.63px;letter-spacing:0.038px;color:#15171c;width:469.85px;overflow:hidden;">M&amp;T Bank Stadium</div>
<div class="t" style="left:528.50px;top:945.21px;font-size:28.92px;letter-spacing:-0.203px;color:#15171c;width:469.70px;overflow:hidden;">1101 Russell Street, Baltimore, MD 21230, USA</div>
<div class="a" style="left:1047.00px;top:916.80px;width:58.00px;height:55.90px;border-radius:8px;border:6px solid #b7d3f6;box-sizing:border-box;"></div>
<div class="t" style="left:1068.88px;top:932.12px;font-size:24.42px;letter-spacing:0.000px;color:#0d1117;-webkit-text-stroke:0.5px #0d1117;">1</div>
<div class="a" style="left:1118.00px;top:916.80px;width:60.00px;height:55.90px;background:#d085dc;border-radius:8px;"></div>
<svg class="a" style="left:1138.00px;top:931.20px;" width="31.20" height="31.20" viewBox="0 0 31.2 31.2"><circle cx="15.6" cy="15.6" r="15.6" fill="#0f0f14"/><path d="M15.6 6.5 V17 L20.2 21.8" fill="none" stroke="#d085dc" stroke-width="3.6" stroke-linecap="butt" stroke-linejoin="miter"/></svg>
<div class="a" style="left:1189.00px;top:916.80px;width:71.80px;height:55.90px;background:#f8d347;border-radius:8px;"></div>
<svg class="a" style="left:1209.70px;top:931.40px;" width="31.20" height="31.20" viewBox="0 0 31.2 31.2"><path d="M12.8 2.4 A13.3 13.3 0 1 0 18.2 2.4" fill="none" stroke="#111" stroke-width="4.6" stroke-linecap="butt"/></svg>
<div class="t" style="left:1628.31px;top:910.90px;font-size:28.34px;letter-spacing:0.025px;color:#15171c;">Snow Removal</div>
<svg class="a" style="left:1633.70px;top:952.30px;" width="19.80" height="22.40" viewBox="0 0 19.8 22.4"><path d="M1.6 0 V14.6 H16" fill="none" stroke="#15171c" stroke-width="3"/><path d="M11 9 L17 14.6 L11 20.6" fill="none" stroke="#15171c" stroke-width="3"/></svg>
<div class="t" style="left:1661.61px;top:946.00px;font-size:28.34px;letter-spacing:-0.881px;color:#15171c;">Snow - Snow …</div>
<div class="t" style="left:1919.81px;top:929.88px;font-size:28.49px;letter-spacing:0.286px;color:#0d1117;-webkit-text-stroke:0.8px #0d1117;">Standard</div>
<div class="a" style="left:2212.20px;top:943.70px;width:8.50px;height:4.60px;background:#0d1117;"></div>
<svg class="a" style="left:2515.20px;top:921.20px;" width="35.50" height="47.60" viewBox="0 0 35.5 47.6"><path d="M0 5 Q0 0 5 0 H21 L35.5 14.7 V42.6 Q35.5 47.6 30.5 47.6 H5 Q0 47.6 0 42.6 Z" fill="rgba(212,164,62,0.42)"/><path d="M21 0 L35.5 14.7 H21 Z" fill="#d6a640"/><rect x="5.8" y="6" width="8.4" height="3.6" fill="#fff" fill-opacity="0.85"/><rect x="5.8" y="11.9" width="8.4" height="3.3" fill="#fff" fill-opacity="0.85"/><text transform="translate(18.1,0) scale(0.86,1)" x="0" y="40.4" font-family="Liberation Sans" font-weight="400" stroke="#d6a640" stroke-width="0.6" font-size="27.4" fill="#d6a640" text-anchor="middle">$</text></svg>
<svg class="a" style="left:2586.10px;top:921.20px;" width="35.50" height="47.60" viewBox="0 0 35.5 47.6"><path d="M0 5 Q0 0 5 0 H21 L35.5 14.7 V42.6 Q35.5 47.6 30.5 47.6 H5 Q0 47.6 0 42.6 Z" fill="rgba(212,164,62,0.42)"/><path d="M21 0 L35.5 14.7 H21 Z" fill="#d6a640"/><rect x="5.8" y="6" width="8.4" height="3.6" fill="#fff" fill-opacity="0.85"/><rect x="5.8" y="11.9" width="8.4" height="3.3" fill="#fff" fill-opacity="0.85"/><text transform="translate(18.1,0) scale(0.86,1)" x="0" y="40.4" font-family="Liberation Sans" font-weight="400" stroke="#d6a640" stroke-width="0.6" font-size="27.4" fill="#d6a640" text-anchor="middle">$</text></svg>
<div class="a" style="left:2649.14px;top:916.80px;width:93.71px;height:55.80px;background:#eff0f5;border-radius:10px;"></div>
<div class="t" style="left:2664.81px;top:932.37px;font-size:24.13px;letter-spacing:-0.100px;color:#0d1117;-webkit-text-stroke:0.4px #0d1117;">100%</div>
<div class="a" style="left:35.70px;top:988.50px;width:2800.00px;height:88.00px;background:#fbfcfe;"></div>
<div class="a" style="left:66.00px;top:1014.90px;width:36.10px;height:36.10px;border-radius:4px;border:4px solid #707275;box-sizing:border-box;"></div>
<div class="t" style="left:172.02px;top:1015.84px;font-size:33.14px;letter-spacing:0.237px;color:#0d1117;-webkit-text-stroke:1.0px #0d1117;">6048940</div>
<div class="a" style="left:462.75px;top:1007.75px;width:50.50px;height:50.50px;background:#eceef5;border-radius:26px;"></div>
<div class="t" style="left:465.56px;top:1018.80px;font-size:28.34px;letter-spacing:0.800px;color:#1a1c20;">WS</div>
<div class="t" style="left:530.57px;top:1001.56px;font-size:28.63px;letter-spacing:-0.011px;color:#15171c;width:467.63px;overflow:hidden;">Walter Solutions Test client 1 - Site1</div>
<div class="t" style="left:529.54px;top:1033.21px;font-size:28.92px;letter-spacing:-0.338px;color:#15171c;width:468.66px;overflow:hidden;">55 Fruit Street, West End, MA 02114, USA</div>
<div class="a" style="left:1047.00px;top:1004.80px;width:58.00px;height:55.90px;border-radius:8px;border:6px solid #b7d3f6;box-sizing:border-box;"></div>
<div class="t" style="left:1068.88px;top:1020.12px;font-size:24.42px;letter-spacing:0.000px;color:#0d1117;-webkit-text-stroke:0.5px #0d1117;">1</div>
<div class="a" style="left:1118.00px;top:1004.80px;width:60.00px;height:55.90px;background:#d085dc;border-radius:8px;"></div>
<svg class="a" style="left:1138.00px;top:1019.20px;" width="31.20" height="31.20" viewBox="0 0 31.2 31.2"><circle cx="15.6" cy="15.6" r="15.6" fill="#0f0f14"/><path d="M15.6 6.5 V17 L20.2 21.8" fill="none" stroke="#d085dc" stroke-width="3.6" stroke-linecap="butt" stroke-linejoin="miter"/></svg>
<div class="a" style="left:1189.00px;top:1004.80px;width:71.80px;height:55.90px;background:#f8d347;border-radius:8px;"></div>
<svg class="a" style="left:1209.70px;top:1019.40px;" width="31.20" height="31.20" viewBox="0 0 31.2 31.2"><path d="M12.8 2.4 A13.3 13.3 0 1 0 18.2 2.4" fill="none" stroke="#111" stroke-width="4.6" stroke-linecap="butt"/></svg>
<div class="t" style="left:1627.27px;top:998.90px;font-size:28.34px;letter-spacing:0.068px;color:#15171c;">Monthly Buildin…</div>
<svg class="a" style="left:1633.70px;top:1040.30px;" width="19.80" height="22.40" viewBox="0 0 19.8 22.4"><path d="M1.6 0 V14.6 H16" fill="none" stroke="#15171c" stroke-width="3"/><path d="M11 9 L17 14.6 L11 20.6" fill="none" stroke="#15171c" stroke-width="3"/></svg>
<div class="t" style="left:1660.28px;top:1034.00px;font-size:28.34px;letter-spacing:-0.267px;color:#15171c;">Inspection - …</div>
<div class="t" style="left:1918.76px;top:1017.88px;font-size:28.49px;letter-spacing:0.286px;color:#0d1117;-webkit-text-stroke:0.8px #0d1117;">Non Emergency</div>
<div class="a" style="left:2212.20px;top:1031.70px;width:8.50px;height:4.60px;background:#0d1117;"></div>
<svg class="a" style="left:2515.20px;top:1009.20px;" width="35.50" height="47.60" viewBox="0 0 35.5 47.6"><path d="M0 5 Q0 0 5 0 H21 L35.5 14.7 V42.6 Q35.5 47.6 30.5 47.6 H5 Q0 47.6 0 42.6 Z" fill="rgba(27,27,27,0.40)"/><path d="M21 0 L35.5 14.7 H21 Z" fill="#1b1b1b"/><rect x="5.8" y="6" width="8.4" height="3.6" fill="#fff" fill-opacity="0.85"/><rect x="5.8" y="11.9" width="8.4" height="3.3" fill="#fff" fill-opacity="0.85"/><text transform="translate(18.1,0) scale(0.86,1)" x="0" y="40.4" font-family="Liberation Sans" font-weight="400" stroke="#1b1b1b" stroke-width="0.6" font-size="27.4" fill="#1b1b1b" text-anchor="middle">$</text></svg>
<svg class="a" style="left:2586.10px;top:1009.20px;" width="35.50" height="47.60" viewBox="0 0 35.5 47.6"><path d="M0 5 Q0 0 5 0 H21 L35.5 14.7 V42.6 Q35.5 47.6 30.5 47.6 H5 Q0 47.6 0 42.6 Z" fill="rgba(27,27,27,0.40)"/><path d="M21 0 L35.5 14.7 H21 Z" fill="#1b1b1b"/><rect x="5.8" y="6" width="8.4" height="3.6" fill="#fff" fill-opacity="0.85"/><rect x="5.8" y="11.9" width="8.4" height="3.3" fill="#fff" fill-opacity="0.85"/><text transform="translate(18.1,0) scale(0.86,1)" x="0" y="40.4" font-family="Liberation Sans" font-weight="400" stroke="#1b1b1b" stroke-width="0.6" font-size="27.4" fill="#1b1b1b" text-anchor="middle">$</text></svg>
<div class="a" style="left:2659.50px;top:1004.80px;width:73.00px;height:55.80px;background:#eff0f5;border-radius:10px;"></div>
<div class="t" style="left:2675.02px;top:1020.37px;font-size:24.13px;letter-spacing:-0.100px;color:#0d1117;-webkit-text-stroke:0.4px #0d1117;">N/A</div>
<div class="a" style="left:35.70px;top:1076.50px;width:2800.00px;height:88.00px;background:#fbfcfe;"></div>
<div class="a" style="left:66.00px;top:1102.90px;width:36.10px;height:36.10px;border-radius:4px;border:4px solid #707275;box-sizing:border-box;"></div>
<div class="t" style="left:172.02px;top:1103.84px;font-size:33.14px;letter-spacing:0.237px;color:#0d1117;-webkit-text-stroke:1.0px #0d1117;">6042084</div>
<div class="a" style="left:462.75px;top:1095.75px;width:50.50px;height:50.50px;background:#eceef5;border-radius:26px;"></div>
<div class="t" style="left:466.03px;top:1106.80px;font-size:28.34px;letter-spacing:0.800px;color:#1a1c20;">MS</div>
<div class="t" style="left:528.35px;top:1089.56px;font-size:28.63px;letter-spacing:0.038px;color:#15171c;width:469.85px;overflow:hidden;">Headquaters Building</div>
<div class="t" style="left:528.33px;top:1121.21px;font-size:28.92px;letter-spacing:-0.413px;color:#15171c;width:469.87px;overflow:hidden;">Russell Way, Randallstown, MD 21133, USA</div>
<div class="a" style="left:1047.00px;top:1092.80px;width:58.00px;height:55.90px;border-radius:8px;border:6px solid #b7d3f6;box-sizing:border-box;"></div>
<div class="t" style="left:1068.88px;top:1108.12px;font-size:24.42px;letter-spacing:0.000px;color:#0d1117;-webkit-text-stroke:0.5px #0d1117;">1</div>
<div class="a" style="left:1118.00px;top:1092.80px;width:60.00px;height:55.90px;background:#d085dc;border-radius:8px;"></div>
<svg class="a" style="left:1138.00px;top:1107.20px;" width="31.20" height="31.20" viewBox="0 0 31.2 31.2"><circle cx="15.6" cy="15.6" r="15.6" fill="#0f0f14"/><path d="M15.6 6.5 V17 L20.2 21.8" fill="none" stroke="#d085dc" stroke-width="3.6" stroke-linecap="butt" stroke-linejoin="miter"/></svg>
<div class="a" style="left:1189.00px;top:1092.80px;width:71.80px;height:55.90px;background:#f8d347;border-radius:8px;"></div>
<svg class="a" style="left:1209.70px;top:1107.40px;" width="31.20" height="31.20" viewBox="0 0 31.2 31.2"><path d="M12.8 2.4 A13.3 13.3 0 1 0 18.2 2.4" fill="none" stroke="#111" stroke-width="4.6" stroke-linecap="butt"/></svg>
<div class="t" style="left:1628.31px;top:1086.90px;font-size:28.34px;letter-spacing:0.025px;color:#15171c;">Snow Removal</div>
<svg class="a" style="left:1633.70px;top:1128.30px;" width="19.80" height="22.40" viewBox="0 0 19.8 22.4"><path d="M1.6 0 V14.6 H16" fill="none" stroke="#15171c" stroke-width="3"/><path d="M11 9 L17 14.6 L11 20.6" fill="none" stroke="#15171c" stroke-width="3"/></svg>
<div class="t" style="left:1661.61px;top:1122.00px;font-size:28.34px;letter-spacing:-0.881px;color:#15171c;">Snow - Snow …</div>
<div class="t" style="left:1919.81px;top:1105.88px;font-size:28.49px;letter-spacing:0.286px;color:#0d1117;-webkit-text-stroke:0.8px #0d1117;">Standard</div>
<div class="a" style="left:2212.20px;top:1119.70px;width:8.50px;height:4.60px;background:#0d1117;"></div>
<svg class="a" style="left:2515.20px;top:1097.20px;" width="35.50" height="47.60" viewBox="0 0 35.5 47.6"><path d="M0 5 Q0 0 5 0 H21 L35.5 14.7 V42.6 Q35.5 47.6 30.5 47.6 H5 Q0 47.6 0 42.6 Z" fill="rgba(212,164,62,0.42)"/><path d="M21 0 L35.5 14.7 H21 Z" fill="#d6a640"/><rect x="5.8" y="6" width="8.4" height="3.6" fill="#fff" fill-opacity="0.85"/><rect x="5.8" y="11.9" width="8.4" height="3.3" fill="#fff" fill-opacity="0.85"/><text transform="translate(18.1,0) scale(0.86,1)" x="0" y="40.4" font-family="Liberation Sans" font-weight="400" stroke="#d6a640" stroke-width="0.6" font-size="27.4" fill="#d6a640" text-anchor="middle">$</text></svg>
<svg class="a" style="left:2586.10px;top:1097.20px;" width="35.50" height="47.60" viewBox="0 0 35.5 47.6"><path d="M0 5 Q0 0 5 0 H21 L35.5 14.7 V42.6 Q35.5 47.6 30.5 47.6 H5 Q0 47.6 0 42.6 Z" fill="rgba(212,164,62,0.42)"/><path d="M21 0 L35.5 14.7 H21 Z" fill="#d6a640"/><rect x="5.8" y="6" width="8.4" height="3.6" fill="#fff" fill-opacity="0.85"/><rect x="5.8" y="11.9" width="8.4" height="3.3" fill="#fff" fill-opacity="0.85"/><text transform="translate(18.1,0) scale(0.86,1)" x="0" y="40.4" font-family="Liberation Sans" font-weight="400" stroke="#d6a640" stroke-width="0.6" font-size="27.4" fill="#d6a640" text-anchor="middle">$</text></svg>
<div class="a" style="left:2659.50px;top:1092.80px;width:73.00px;height:55.80px;background:#eff0f5;border-radius:10px;"></div>
<div class="t" style="left:2675.02px;top:1108.37px;font-size:24.13px;letter-spacing:-0.100px;color:#0d1117;-webkit-text-stroke:0.4px #0d1117;">N/A</div>
<div class="a" style="left:35.70px;top:1164.50px;width:2800.00px;height:88.00px;background:#fbfcfe;"></div>
<div class="a" style="left:66.00px;top:1190.90px;width:36.10px;height:36.10px;border-radius:4px;border:4px solid #707275;box-sizing:border-box;"></div>
<div class="t" style="left:172.02px;top:1191.84px;font-size:33.14px;letter-spacing:0.237px;color:#0d1117;-webkit-text-stroke:1.0px #0d1117;">6042083</div>
<div class="a" style="left:462.75px;top:1183.75px;width:50.50px;height:50.50px;background:#eceef5;border-radius:26px;"></div>
<div class="t" style="left:466.03px;top:1194.80px;font-size:28.34px;letter-spacing:0.800px;color:#1a1c20;">MS</div>
<div class="t" style="left:530.06px;top:1177.56px;font-size:28.63px;letter-spacing:0.038px;color:#15171c;width:468.14px;overflow:hidden;">Training Center</div>
<div class="t" style="left:528.33px;top:1209.21px;font-size:28.92px;letter-spacing:-0.191px;color:#15171c;width:469.87px;overflow:hidden;">Russell Street, Baltimore, MD 21230, USA</div>
<div class="a" style="left:1047.00px;top:1180.80px;width:58.00px;height:55.90px;border-radius:8px;border:6px solid #b7d3f6;box-sizing:border-box;"></div>
<div class="t" style="left:1068.88px;top:1196.12px;font-size:24.42px;letter-spacing:0.000px;color:#0d1117;-webkit-text-stroke:0.5px #0d1117;">1</div>
<div class="a" style="left:1118.00px;top:1180.80px;width:60.00px;height:55.90px;background:#d085dc;border-radius:8px;"></div>
<svg class="a" style="left:1138.00px;top:1195.20px;" width="31.20" height="31.20" viewBox="0 0 31.2 31.2"><circle cx="15.6" cy="15.6" r="15.6" fill="#0f0f14"/><path d="M15.6 6.5 V17 L20.2 21.8" fill="none" stroke="#d085dc" stroke-width="3.6" stroke-linecap="butt" stroke-linejoin="miter"/></svg>
<div class="a" style="left:1189.00px;top:1180.80px;width:71.80px;height:55.90px;background:#f8d347;border-radius:8px;"></div>
<svg class="a" style="left:1209.70px;top:1195.40px;" width="31.20" height="31.20" viewBox="0 0 31.2 31.2"><path d="M12.8 2.4 A13.3 13.3 0 1 0 18.2 2.4" fill="none" stroke="#111" stroke-width="4.6" stroke-linecap="butt"/></svg>
<div class="t" style="left:1628.31px;top:1174.90px;font-size:28.34px;letter-spacing:0.025px;color:#15171c;">Snow Removal</div>
<svg class="a" style="left:1633.70px;top:1216.30px;" width="19.80" height="22.40" viewBox="0 0 19.8 22.4"><path d="M1.6 0 V14.6 H16" fill="none" stroke="#15171c" stroke-width="3"/><path d="M11 9 L17 14.6 L11 20.6" fill="none" stroke="#15171c" stroke-width="3"/></svg>
<div class="t" style="left:1661.61px;top:1210.00px;font-size:28.34px;letter-spacing:-0.881px;color:#15171c;">Snow - Snow …</div>
<div class="t" style="left:1919.81px;top:1193.88px;font-size:28.49px;letter-spacing:0.286px;color:#0d1117;-webkit-text-stroke:0.8px #0d1117;">Standard</div>
<div class="a" style="left:2212.20px;top:1207.70px;width:8.50px;height:4.60px;background:#0d1117;"></div>
<svg class="a" style="left:2515.20px;top:1185.20px;" width="35.50" height="47.60" viewBox="0 0 35.5 47.6"><path d="M0 5 Q0 0 5 0 H21 L35.5 14.7 V42.6 Q35.5 47.6 30.5 47.6 H5 Q0 47.6 0 42.6 Z" fill="rgba(212,164,62,0.42)"/><path d="M21 0 L35.5 14.7 H21 Z" fill="#d6a640"/><rect x="5.8" y="6" width="8.4" height="3.6" fill="#fff" fill-opacity="0.85"/><rect x="5.8" y="11.9" width="8.4" height="3.3" fill="#fff" fill-opacity="0.85"/><text transform="translate(18.1,0) scale(0.86,1)" x="0" y="40.4" font-family="Liberation Sans" font-weight="400" stroke="#d6a640" stroke-width="0.6" font-size="27.4" fill="#d6a640" text-anchor="middle">$</text></svg>
<svg class="a" style="left:2586.10px;top:1185.20px;" width="35.50" height="47.60" viewBox="0 0 35.5 47.6"><path d="M0 5 Q0 0 5 0 H21 L35.5 14.7 V42.6 Q35.5 47.6 30.5 47.6 H5 Q0 47.6 0 42.6 Z" fill="rgba(212,164,62,0.42)"/><path d="M21 0 L35.5 14.7 H21 Z" fill="#d6a640"/><rect x="5.8" y="6" width="8.4" height="3.6" fill="#fff" fill-opacity="0.85"/><rect x="5.8" y="11.9" width="8.4" height="3.3" fill="#fff" fill-opacity="0.85"/><text transform="translate(18.1,0) scale(0.86,1)" x="0" y="40.4" font-family="Liberation Sans" font-weight="400" stroke="#d6a640" stroke-width="0.6" font-size="27.4" fill="#d6a640" text-anchor="middle">$</text></svg>
<div class="a" style="left:2659.50px;top:1180.80px;width:73.00px;height:55.80px;background:#eff0f5;border-radius:10px;"></div>
<div class="t" style="left:2675.02px;top:1196.37px;font-size:24.13px;letter-spacing:-0.100px;color:#0d1117;-webkit-text-stroke:0.4px #0d1117;">N/A</div>
<div class="a" style="left:35.70px;top:1252.50px;width:2800.00px;height:88.00px;background:#fbfcfe;"></div>
<div class="a" style="left:66.00px;top:1278.90px;width:36.10px;height:36.10px;border-radius:4px;border:4px solid #707275;box-sizing:border-box;"></div>
<div class="t" style="left:172.02px;top:1279.84px;font-size:33.14px;letter-spacing:0.237px;color:#0d1117;-webkit-text-stroke:1.0px #0d1117;">6042080</div>
<div class="a" style="left:462.75px;top:1271.75px;width:50.50px;height:50.50px;background:#eceef5;border-radius:26px;"></div>
<div class="t" style="left:466.03px;top:1282.80px;font-size:28.34px;letter-spacing:0.800px;color:#1a1c20;">MS</div>
<div class="t" style="left:528.35px;top:1265.56px;font-size:28.63px;letter-spacing:0.038px;color:#15171c;width:469.85px;overflow:hidden;">M&amp;T Bank Stadium</div>
<div class="t" style="left:528.50px;top:1297.21px;font-size:28.92px;letter-spacing:-0.203px;color:#15171c;width:469.70px;overflow:hidden;">1101 Russell Street, Baltimore, MD 21230, USA</div>
<div class="a" style="left:1047.00px;top:1268.80px;width:58.00px;height:55.90px;border-radius:8px;border:6px solid #b7d3f6;box-sizing:border-box;"></div>
<div class="t" style="left:1068.88px;top:1284.12px;font-size:24.42px;letter-spacing:0.000px;color:#0d1117;-webkit-text-stroke:0.5px #0d1117;">1</div>
<div class="a" style="left:1118.00px;top:1268.80px;width:60.00px;height:55.90px;background:#d085dc;border-radius:8px;"></div>
<svg class="a" style="left:1138.00px;top:1283.20px;" width="31.20" height="31.20" viewBox="0 0 31.2 31.2"><circle cx="15.6" cy="15.6" r="15.6" fill="#0f0f14"/><path d="M15.6 6.5 V17 L20.2 21.8" fill="none" stroke="#d085dc" stroke-width="3.6" stroke-linecap="butt" stroke-linejoin="miter"/></svg>
<div class="a" style="left:1189.00px;top:1268.80px;width:71.80px;height:55.90px;background:#f8d347;border-radius:8px;"></div>
<svg class="a" style="left:1209.70px;top:1283.40px;" width="31.20" height="31.20" viewBox="0 0 31.2 31.2"><path d="M12.8 2.4 A13.3 13.3 0 1 0 18.2 2.4" fill="none" stroke="#111" stroke-width="4.6" stroke-linecap="butt"/></svg>
<div class="t" style="left:1628.31px;top:1262.90px;font-size:28.34px;letter-spacing:0.025px;color:#15171c;">Snow Removal</div>
<svg class="a" style="left:1633.70px;top:1304.30px;" width="19.80" height="22.40" viewBox="0 0 19.8 22.4"><path d="M1.6 0 V14.6 H16" fill="none" stroke="#15171c" stroke-width="3"/><path d="M11 9 L17 14.6 L11 20.6" fill="none" stroke="#15171c" stroke-width="3"/></svg>
<div class="t" style="left:1661.61px;top:1298.00px;font-size:28.34px;letter-spacing:-0.881px;color:#15171c;">Snow - Snow …</div>
<div class="t" style="left:1919.81px;top:1281.88px;font-size:28.49px;letter-spacing:0.286px;color:#0d1117;-webkit-text-stroke:0.8px #0d1117;">Standard</div>
<div class="a" style="left:2212.20px;top:1295.70px;width:8.50px;height:4.60px;background:#0d1117;"></div>
<svg class="a" style="left:2515.20px;top:1273.20px;" width="35.50" height="47.60" viewBox="0 0 35.5 47.6"><path d="M0 5 Q0 0 5 0 H21 L35.5 14.7 V42.6 Q35.5 47.6 30.5 47.6 H5 Q0 47.6 0 42.6 Z" fill="rgba(212,164,62,0.42)"/><path d="M21 0 L35.5 14.7 H21 Z" fill="#d6a640"/><rect x="5.8" y="6" width="8.4" height="3.6" fill="#fff" fill-opacity="0.85"/><rect x="5.8" y="11.9" width="8.4" height="3.3" fill="#fff" fill-opacity="0.85"/><text transform="translate(18.1,0) scale(0.86,1)" x="0" y="40.4" font-family="Liberation Sans" font-weight="400" stroke="#d6a640" stroke-width="0.6" font-size="27.4" fill="#d6a640" text-anchor="middle">$</text></svg>
<svg class="a" style="left:2586.10px;top:1273.20px;" width="35.50" height="47.60" viewBox="0 0 35.5 47.6"><path d="M0 5 Q0 0 5 0 H21 L35.5 14.7 V42.6 Q35.5 47.6 30.5 47.6 H5 Q0 47.6 0 42.6 Z" fill="rgba(212,164,62,0.42)"/><path d="M21 0 L35.5 14.7 H21 Z" fill="#d6a640"/><rect x="5.8" y="6" width="8.4" height="3.6" fill="#fff" fill-opacity="0.85"/><rect x="5.8" y="11.9" width="8.4" height="3.3" fill="#fff" fill-opacity="0.85"/><text transform="translate(18.1,0) scale(0.86,1)" x="0" y="40.4" font-family="Liberation Sans" font-weight="400" stroke="#d6a640" stroke-width="0.6" font-size="27.4" fill="#d6a640" text-anchor="middle">$</text></svg>
<div class="a" style="left:2659.50px;top:1268.80px;width:73.00px;height:55.80px;background:#eff0f5;border-radius:10px;"></div>
<div class="t" style="left:2675.02px;top:1284.37px;font-size:24.13px;letter-spacing:-0.100px;color:#0d1117;-webkit-text-stroke:0.4px #0d1117;">N/A</div>
<div class="a" style="left:35.70px;top:1340.50px;width:2800.00px;height:88.00px;background:#fbfcfe;"></div>
<div class="a" style="left:66.00px;top:1366.90px;width:36.10px;height:36.10px;border-radius:4px;border:4px solid #707275;box-sizing:border-box;"></div>
<div class="t" style="left:172.37px;top:1367.84px;font-size:33.14px;letter-spacing:0.237px;color:#0d1117;-webkit-text-stroke:1.0px #0d1117;">5997879</div>
<div class="a" style="left:462.75px;top:1359.75px;width:50.50px;height:50.50px;background:#eceef5;border-radius:26px;"></div>
<div class="t" style="left:466.03px;top:1370.80px;font-size:28.34px;letter-spacing:0.800px;color:#1a1c20;">MS</div>
<div class="t" style="left:528.35px;top:1353.56px;font-size:28.63px;letter-spacing:0.038px;color:#15171c;width:469.85px;overflow:hidden;">M&amp;T Bank Stadium</div>
<div class="t" style="left:528.50px;top:1385.21px;font-size:28.92px;letter-spacing:-0.203px;color:#15171c;width:469.70px;overflow:hidden;">1101 Russell Street, Baltimore, MD 21230, USA</div>
<div class="a" style="left:1047.00px;top:1356.80px;width:58.00px;height:55.90px;border-radius:8px;border:6px solid #96ef4b;box-sizing:border-box;"></div>
<div class="t" style="left:1068.88px;top:1372.12px;font-size:24.42px;letter-spacing:0.000px;color:#0d1117;-webkit-text-stroke:0.5px #0d1117;">1</div>
<div class="a" style="left:1118.00px;top:1356.80px;width:60.00px;height:55.90px;background:#d085dc;border-radius:8px;"></div>
<svg class="a" style="left:1138.00px;top:1371.20px;" width="31.20" height="31.20" viewBox="0 0 31.2 31.2"><circle cx="15.6" cy="15.6" r="15.6" fill="#0f0f14"/><path d="M15.6 6.5 V17 L20.2 21.8" fill="none" stroke="#d085dc" stroke-width="3.6" stroke-linecap="butt" stroke-linejoin="miter"/></svg>
<div class="a" style="left:1189.00px;top:1356.80px;width:71.80px;height:55.90px;background:#f8d347;border-radius:8px;"></div>
<svg class="a" style="left:1209.70px;top:1371.40px;" width="31.20" height="31.20" viewBox="0 0 31.2 31.2"><path d="M12.8 2.4 A13.3 13.3 0 1 0 18.2 2.4" fill="none" stroke="#111" stroke-width="4.6" stroke-linecap="butt"/></svg>
<svg class="a" style="left:1336.80px;top:1357.00px;" width="56.00" height="56.00" viewBox="0 0 56 56"><defs><clipPath id="avc"><circle cx="28" cy="28" r="27.3"/></clipPath></defs><circle cx="28" cy="28" r="27.3" fill="#fff" stroke="#e6e6e8" stroke-width="1"/><g clip-path="url(#avc)"><path d="M1 44 Q8 37 21 34 L28 42 L35 34 Q48 37 55 44 L56 60 H0 Z" fill="#262729"/><path d="M22 33 L28 44 L34 33 Z" fill="#3b2d26"/><rect x="23" y="28" width="10" height="8" fill="#a98066"/><ellipse cx="27.8" cy="21" rx="9.6" ry="12.6" fill="#c09378"/><path d="M18 19 Q17 6 28 5.5 Q39 6 37.8 19 Q36 12 28 11.5 Q20 12 18 19 Z" fill="#221b17"/><rect x="21.5" y="19.5" width="4.2" height="1.5" fill="#4a3326"/><rect x="30" y="19.5" width="4.2" height="1.5" fill="#4a3326"/><rect x="25" y="27.5" width="6" height="1.3" fill="#7a5240"/></g></svg>
<div class="t" style="left:1627.27px;top:1350.90px;font-size:28.34px;letter-spacing:-0.231px;color:#15171c;">Routine Landsc…</div>
<svg class="a" style="left:1633.70px;top:1392.30px;" width="19.80" height="22.40" viewBox="0 0 19.8 22.4"><path d="M1.6 0 V14.6 H16" fill="none" stroke="#15171c" stroke-width="3"/><path d="M11 9 L17 14.6 L11 20.6" fill="none" stroke="#15171c" stroke-width="3"/></svg>
<div class="t" style="left:1660.57px;top:1386.00px;font-size:28.34px;letter-spacing:-0.582px;color:#15171c;">Rutina de Lan…</div>
<div class="t" style="left:1919.81px;top:1369.88px;font-size:28.49px;letter-spacing:0.286px;color:#0d1117;-webkit-text-stroke:0.8px #0d1117;">Standard</div>
<div class="a" style="left:2212.20px;top:1383.70px;width:8.50px;height:4.60px;background:#0d1117;"></div>
<svg class="a" style="left:2515.20px;top:1361.20px;" width="35.50" height="47.60" viewBox="0 0 35.5 47.6"><path d="M0 5 Q0 0 5 0 H21 L35.5 14.7 V42.6 Q35.5 47.6 30.5 47.6 H5 Q0 47.6 0 42.6 Z" fill="rgba(212,164,62,0.42)"/><path d="M21 0 L35.5 14.7 H21 Z" fill="#d6a640"/><rect x="5.8" y="6" width="8.4" height="3.6" fill="#fff" fill-opacity="0.85"/><rect x="5.8" y="11.9" width="8.4" height="3.3" fill="#fff" fill-opacity="0.85"/><text transform="translate(18.1,0) scale(0.86,1)" x="0" y="40.4" font-family="Liberation Sans" font-weight="400" stroke="#d6a640" stroke-width="0.6" font-size="27.4" fill="#d6a640" text-anchor="middle">$</text></svg>
<svg class="a" style="left:2586.10px;top:1361.20px;" width="35.50" height="47.60" viewBox="0 0 35.5 47.6"><path d="M0 5 Q0 0 5 0 H21 L35.5 14.7 V42.6 Q35.5 47.6 30.5 47.6 H5 Q0 47.6 0 42.6 Z" fill="rgba(229,57,53,0.40)"/><path d="M21 0 L35.5 14.7 H21 Z" fill="#e53935"/><rect x="5.8" y="6" width="8.4" height="3.6" fill="#fff" fill-opacity="0.85"/><rect x="5.8" y="11.9" width="8.4" height="3.3" fill="#fff" fill-opacity="0.85"/><text transform="translate(18.1,0) scale(0.86,1)" x="0" y="40.4" font-family="Liberation Sans" font-weight="400" stroke="#e53935" stroke-width="0.6" font-size="27.4" fill="#e53935" text-anchor="middle">$</text></svg>
<div class="a" style="left:2638.54px;top:1356.80px;width:114.92px;height:55.80px;background:#eff0f5;border-radius:10px;"></div>
<div class="t" style="left:2655.49px;top:1372.37px;font-size:24.13px;letter-spacing:-0.100px;color:#0d1117;-webkit-text-stroke:0.4px #0d1117;">47.06%</div>
<div class="a" style="left:35.70px;top:1428.50px;width:2800.00px;height:88.00px;background:#fbfcfe;"></div>
<div class="a" style="left:66.00px;top:1454.90px;width:36.10px;height:36.10px;border-radius:4px;border:4px solid #707275;box-sizing:border-box;"></div>
<div class="t" style="left:172.37px;top:1455.84px;font-size:33.14px;letter-spacing:0.237px;color:#0d1117;-webkit-text-stroke:1.0px #0d1117;">5987671</div>
<div class="a" style="left:462.75px;top:1447.75px;width:50.50px;height:50.50px;background:#eceef5;border-radius:26px;"></div>
<div class="t" style="left:466.03px;top:1458.80px;font-size:28.34px;letter-spacing:0.800px;color:#1a1c20;">MS</div>
<div class="t" style="left:528.35px;top:1441.56px;font-size:28.63px;letter-spacing:0.038px;color:#15171c;width:469.85px;overflow:hidden;">M&amp;T Bank Stadium</div>
<div class="t" style="left:528.50px;top:1473.21px;font-size:28.92px;letter-spacing:-0.203px;color:#15171c;width:469.70px;overflow:hidden;">1101 Russell Street, Baltimore, MD 21230, USA</div>
<div class="a" style="left:1047.00px;top:1444.80px;width:58.00px;height:55.90px;border-radius:8px;border:6px solid #96ef4b;box-sizing:border-box;"></div>
<div class="t" style="left:1068.88px;top:1460.12px;font-size:24.42px;letter-spacing:0.000px;color:#0d1117;-webkit-text-stroke:0.5px #0d1117;">1</div>
<div class="a" style="left:1118.00px;top:1444.80px;width:60.00px;height:55.90px;background:#d085dc;border-radius:8px;"></div>
<svg class="a" style="left:1138.00px;top:1459.20px;" width="31.20" height="31.20" viewBox="0 0 31.2 31.2"><circle cx="15.6" cy="15.6" r="15.6" fill="#0f0f14"/><path d="M15.6 6.5 V17 L20.2 21.8" fill="none" stroke="#d085dc" stroke-width="3.6" stroke-linecap="butt" stroke-linejoin="miter"/></svg>
<div class="a" style="left:1189.20px;top:1444.80px;width:99.60px;height:55.90px;background:#f1a545;border-radius:8px;"></div>
<svg class="a" style="left:1213.00px;top:1459.00px;" width="23.80" height="32.00" viewBox="0 0 23.8 32"><path d="M1.5 0 H14.5 V9.3 H23.8 V30.5 Q23.8 32 22.3 32 H1.5 Q0 32 0 30.5 V1.5 Q0 0 1.5 0 Z" fill="#0f0f14"/><path d="M16.3 0 L23.8 7.5 H16.3 Z" fill="#0f0f14"/><rect x="10.3" y="13.2" width="3.4" height="9.2" rx="1" fill="#f1a545"/><circle cx="12" cy="26.2" r="2" fill="#f1a545"/></svg>
<div class="t" style="left:1255.38px;top:1460.22px;font-size:24.42px;letter-spacing:0.000px;color:#0d1117;-webkit-text-stroke:0.5px #0d1117;">1</div>
<svg class="a" style="left:1336.80px;top:1445.00px;" width="56.00" height="56.00" viewBox="0 0 56 56"><defs><clipPath id="avc"><circle cx="28" cy="28" r="27.3"/></clipPath></defs><circle cx="28" cy="28" r="27.3" fill="#fff" stroke="#e6e6e8" stroke-width="1"/><g clip-path="url(#avc)"><path d="M1 44 Q8 37 21 34 L28 42 L35 34 Q48 37 55 44 L56 60 H0 Z" fill="#262729"/><path d="M22 33 L28 44 L34 33 Z" fill="#3b2d26"/><rect x="23" y="28" width="10" height="8" fill="#a98066"/><ellipse cx="27.8" cy="21" rx="9.6" ry="12.6" fill="#c09378"/><path d="M18 19 Q17 6 28 5.5 Q39 6 37.8 19 Q36 12 28 11.5 Q20 12 18 19 Z" fill="#221b17"/><rect x="21.5" y="19.5" width="4.2" height="1.5" fill="#4a3326"/><rect x="30" y="19.5" width="4.2" height="1.5" fill="#4a3326"/><rect x="25" y="27.5" width="6" height="1.3" fill="#7a5240"/></g></svg>
<div class="t" style="left:1628.31px;top:1438.90px;font-size:28.34px;letter-spacing:0.025px;color:#15171c;">Snow Removal</div>
<svg class="a" style="left:1633.70px;top:1480.30px;" width="19.80" height="22.40" viewBox="0 0 19.8 22.4"><path d="M1.6 0 V14.6 H16" fill="none" stroke="#15171c" stroke-width="3"/><path d="M11 9 L17 14.6 L11 20.6" fill="none" stroke="#15171c" stroke-width="3"/></svg>
<div class="t" style="left:1661.61px;top:1474.00px;font-size:28.34px;letter-spacing:-0.938px;color:#15171c;">Snow WO</div>
<div class="t" style="left:1919.81px;top:1457.88px;font-size:28.49px;letter-spacing:0.286px;color:#0d1117;-webkit-text-stroke:0.8px #0d1117;">Standard</div>
<div class="a" style="left:2212.20px;top:1471.70px;width:8.50px;height:4.60px;background:#0d1117;"></div>
<svg class="a" style="left:2515.20px;top:1449.20px;" width="35.50" height="47.60" viewBox="0 0 35.5 47.6"><path d="M0 5 Q0 0 5 0 H21 L35.5 14.7 V42.6 Q35.5 47.6 30.5 47.6 H5 Q0 47.6 0 42.6 Z" fill="rgba(27,27,27,0.40)"/><path d="M21 0 L35.5 14.7 H21 Z" fill="#1b1b1b"/><rect x="5.8" y="6" width="8.4" height="3.6" fill="#fff" fill-opacity="0.85"/><rect x="5.8" y="11.9" width="8.4" height="3.3" fill="#fff" fill-opacity="0.85"/><text transform="translate(18.1,0) scale(0.86,1)" x="0" y="40.4" font-family="Liberation Sans" font-weight="400" stroke="#1b1b1b" stroke-width="0.6" font-size="27.4" fill="#1b1b1b" text-anchor="middle">$</text></svg>
<svg class="a" style="left:2586.10px;top:1449.20px;" width="35.50" height="47.60" viewBox="0 0 35.5 47.6"><path d="M0 5 Q0 0 5 0 H21 L35.5 14.7 V42.6 Q35.5 47.6 30.5 47.6 H5 Q0 47.6 0 42.6 Z" fill="rgba(27,27,27,0.40)"/><path d="M21 0 L35.5 14.7 H21 Z" fill="#1b1b1b"/><rect x="5.8" y="6" width="8.4" height="3.6" fill="#fff" fill-opacity="0.85"/><rect x="5.8" y="11.9" width="8.4" height="3.3" fill="#fff" fill-opacity="0.85"/><text transform="translate(18.1,0) scale(0.86,1)" x="0" y="40.4" font-family="Liberation Sans" font-weight="400" stroke="#1b1b1b" stroke-width="0.6" font-size="27.4" fill="#1b1b1b" text-anchor="middle">$</text></svg>
<div class="a" style="left:2645.53px;top:1444.80px;width:100.94px;height:55.80px;background:#eff0f5;border-radius:10px;"></div>
<div class="t" style="left:2661.82px;top:1460.37px;font-size:24.13px;letter-spacing:-0.100px;color:#0d1117;-webkit-text-stroke:0.4px #0d1117;">25.8%</div>
<div class="a" style="left:35.70px;top:1516.50px;width:2800.00px;height:88.00px;background:#fbfcfe;"></div>
<div class="a" style="left:66.00px;top:1542.90px;width:36.10px;height:36.10px;border-radius:4px;border:4px solid #707275;box-sizing:border-box;"></div>
<div class="t" style="left:172.37px;top:1543.84px;font-size:33.14px;letter-spacing:0.237px;color:#0d1117;-webkit-text-stroke:1.0px #0d1117;">5987670</div>
<div class="a" style="left:462.75px;top:1535.75px;width:50.50px;height:50.50px;background:#eceef5;border-radius:26px;"></div>
<div class="t" style="left:466.03px;top:1546.80px;font-size:28.34px;letter-spacing:0.800px;color:#1a1c20;">MS</div>
<div class="t" style="left:528.35px;top:1529.56px;font-size:28.63px;letter-spacing:0.038px;color:#15171c;width:469.85px;overflow:hidden;">M&amp;T Bank Stadium</div>
<div class="t" style="left:528.50px;top:1561.21px;font-size:28.92px;letter-spacing:-0.203px;color:#15171c;width:469.70px;overflow:hidden;">1101 Russell Street, Baltimore, MD 21230, USA</div>
<div class="a" style="left:1047.00px;top:1532.80px;width:58.00px;height:55.90px;border-radius:8px;border:6px solid #96ef4b;box-sizing:border-box;"></div>
<div class="t" style="left:1068.88px;top:1548.12px;font-size:24.42px;letter-spacing:0.000px;color:#0d1117;-webkit-text-stroke:0.5px #0d1117;">1</div>
<div class="a" style="left:1118.00px;top:1532.80px;width:60.00px;height:55.90px;background:#d085dc;border-radius:8px;"></div>
<svg class="a" style="left:1138.00px;top:1547.20px;" width="31.20" height="31.20" viewBox="0 0 31.2 31.2"><circle cx="15.6" cy="15.6" r="15.6" fill="#0f0f14"/><path d="M15.6 6.5 V17 L20.2 21.8" fill="none" stroke="#d085dc" stroke-width="3.6" stroke-linecap="butt" stroke-linejoin="miter"/></svg>
<div class="a" style="left:1189.20px;top:1532.80px;width:99.60px;height:55.90px;background:#f1a545;border-radius:8px;"></div>
<svg class="a" style="left:1213.00px;top:1547.00px;" width="23.80" height="32.00" viewBox="0 0 23.8 32"><path d="M1.5 0 H14.5 V9.3 H23.8 V30.5 Q23.8 32 22.3 32 H1.5 Q0 32 0 30.5 V1.5 Q0 0 1.5 0 Z" fill="#0f0f14"/><path d="M16.3 0 L23.8 7.5 H16.3 Z" fill="#0f0f14"/><rect x="10.3" y="13.2" width="3.4" height="9.2" rx="1" fill="#f1a545"/><circle cx="12" cy="26.2" r="2" fill="#f1a545"/></svg>
<div class="t" style="left:1255.38px;top:1548.22px;font-size:24.42px;letter-spacing:0.000px;color:#0d1117;-webkit-text-stroke:0.5px #0d1117;">1</div>
<svg class="a" style="left:1336.80px;top:1533.00px;" width="56.00" height="56.00" viewBox="0 0 56 56"><defs><clipPath id="avc"><circle cx="28" cy="28" r="27.3"/></clipPath></defs><circle cx="28" cy="28" r="27.3" fill="#fff" stroke="#e6e6e8" stroke-width="1"/><g clip-path="url(#avc)"><path d="M1 44 Q8 37 21 34 L28 42 L35 34 Q48 37 55 44 L56 60 H0 Z" fill="#262729"/><path d="M22 33 L28 44 L34 33 Z" fill="#3b2d26"/><rect x="23" y="28" width="10" height="8" fill="#a98066"/><ellipse cx="27.8" cy="21" rx="9.6" ry="12.6" fill="#c09378"/><path d="M18 19 Q17 6 28 5.5 Q39 6 37.8 19 Q36 12 28 11.5 Q20 12 18 19 Z" fill="#221b17"/><rect x="21.5" y="19.5" width="4.2" height="1.5" fill="#4a3326"/><rect x="30" y="19.5" width="4.2" height="1.5" fill="#4a3326"/><rect x="25" y="27.5" width="6" height="1.3" fill="#7a5240"/></g></svg>
<div class="t" style="left:1628.31px;top:1526.90px;font-size:28.34px;letter-spacing:0.025px;color:#15171c;">Snow Removal</div>
<svg class="a" style="left:1633.70px;top:1568.30px;" width="19.80" height="22.40" viewBox="0 0 19.8 22.4"><path d="M1.6 0 V14.6 H16" fill="none" stroke="#15171c" stroke-width="3"/><path d="M11 9 L17 14.6 L11 20.6" fill="none" stroke="#15171c" stroke-width="3"/></svg>
<div class="t" style="left:1661.61px;top:1562.00px;font-size:28.34px;letter-spacing:-0.938px;color:#15171c;">Snow WO</div>
<div class="t" style="left:1919.81px;top:1545.88px;font-size:28.49px;letter-spacing:0.286px;color:#0d1117;-webkit-text-stroke:0.8px #0d1117;">Standard</div>
<div class="a" style="left:2212.20px;top:1559.70px;width:8.50px;height:4.60px;background:#0d1117;"></div>
<svg class="a" style="left:2515.20px;top:1537.20px;" width="35.50" height="47.60" viewBox="0 0 35.5 47.6"><path d="M0 5 Q0 0 5 0 H21 L35.5 14.7 V42.6 Q35.5 47.6 30.5 47.6 H5 Q0 47.6 0 42.6 Z" fill="rgba(27,27,27,0.40)"/><path d="M21 0 L35.5 14.7 H21 Z" fill="#1b1b1b"/><rect x="5.8" y="6" width="8.4" height="3.6" fill="#fff" fill-opacity="0.85"/><rect x="5.8" y="11.9" width="8.4" height="3.3" fill="#fff" fill-opacity="0.85"/><text transform="translate(18.1,0) scale(0.86,1)" x="0" y="40.4" font-family="Liberation Sans" font-weight="400" stroke="#1b1b1b" stroke-width="0.6" font-size="27.4" fill="#1b1b1b" text-anchor="middle">$</text></svg>
<svg class="a" style="left:2586.10px;top:1537.20px;" width="35.50" height="47.60" viewBox="0 0 35.5 47.6"><path d="M0 5 Q0 0 5 0 H21 L35.5 14.7 V42.6 Q35.5 47.6 30.5 47.6 H5 Q0 47.6 0 42.6 Z" fill="rgba(27,27,27,0.40)"/><path d="M21 0 L35.5 14.7 H21 Z" fill="#1b1b1b"/><rect x="5.8" y="6" width="8.4" height="3.6" fill="#fff" fill-opacity="0.85"/><rect x="5.8" y="11.9" width="8.4" height="3.3" fill="#fff" fill-opacity="0.85"/><text transform="translate(18.1,0) scale(0.86,1)" x="0" y="40.4" font-family="Liberation Sans" font-weight="400" stroke="#1b1b1b" stroke-width="0.6" font-size="27.4" fill="#1b1b1b" text-anchor="middle">$</text></svg>
<div class="a" style="left:2645.53px;top:1532.80px;width:100.94px;height:55.80px;background:#eff0f5;border-radius:10px;"></div>
<div class="t" style="left:2661.82px;top:1548.37px;font-size:24.13px;letter-spacing:-0.100px;color:#0d1117;-webkit-text-stroke:0.4px #0d1117;">25.8%</div>
<div class="a" style="left:321.90px;top:737.10px;width:242.00px;height:63.50px;background:#23262d;border-radius:16px;"></div>
<div class="t" style="left:354.97px;top:755.05px;font-size:26.16px;letter-spacing:-2.721px;color:#e8eaee;font-weight:700;">WO</div>
<div class="t" style="left:406.29px;top:755.05px;font-size:26.16px;letter-spacing:1.351px;color:#e8eaee;">#6050033</div>
<div class="a" style="left:155px;top:663px;width:214px;height:214px;border-radius:50%;box-sizing:border-box;border:12px solid #f8953a;background:rgba(253,150,60,0.5);"></div></div></body></html>
